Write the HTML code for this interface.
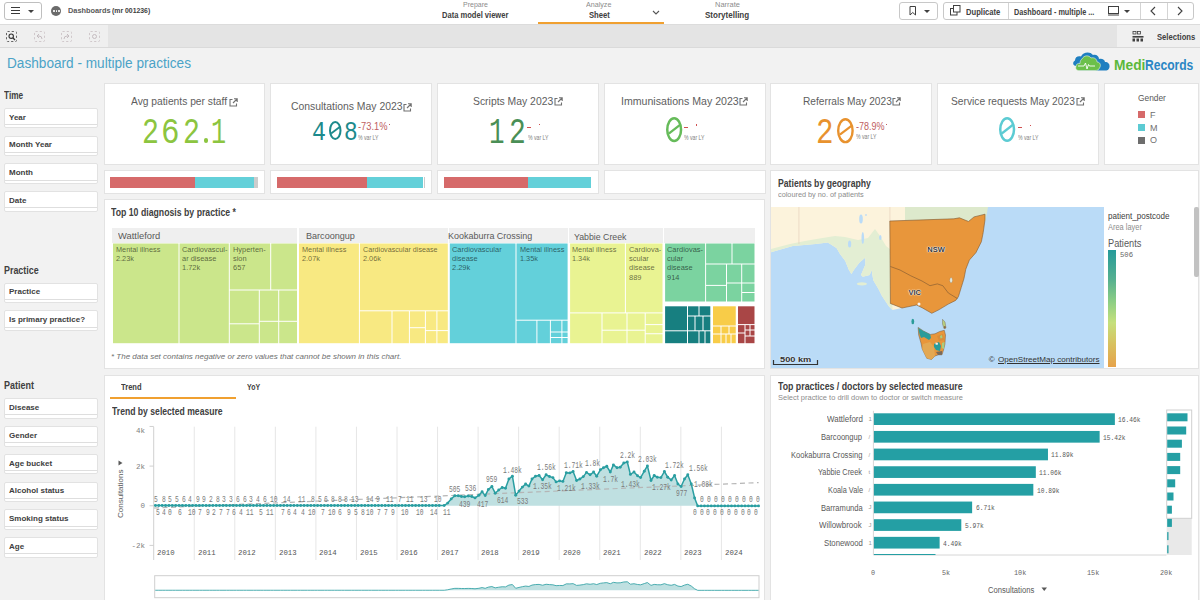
<!DOCTYPE html>
<html><head><meta charset="utf-8">
<style>
*{box-sizing:border-box;margin:0;padding:0}
html,body{width:1200px;height:600px;overflow:hidden;background:#f2f2f2;font-family:"Liberation Sans",sans-serif}
.a{position:absolute}
.t{position:absolute;white-space:nowrap;line-height:normal;transform-origin:0 0}
.card{position:absolute;background:#fff;border:1px solid #e3e3e3}
svg{position:absolute;overflow:visible}
</style></head><body>
<div class="a" style="left:0px;top:0px;width:1200px;height:24px;background:#fff;"></div>
<div class="a" style="left:4px;top:2px;width:38px;height:18px;border:1px solid #bfbfbf;border-radius:3px;background:#fff"></div>
<div class="a" style="left:11px;top:7px;width:9px;height:1.3px;background:#3a3a3a;"></div>
<div class="a" style="left:11px;top:10px;width:9px;height:1.3px;background:#3a3a3a;"></div>
<div class="a" style="left:11px;top:13px;width:9px;height:1.3px;background:#3a3a3a;"></div>
<div class="a" style="left:28px;top:10px;width:0;height:0;border-left:3px solid transparent;border-right:3px solid transparent;border-top:3.5px solid #404040"></div>
<div class="a" style="left:51px;top:6px;width:10px;height:10px;border-radius:50%;background:#6b6b6b"></div>
<div class="a" style="left:53.2px;top:10.2px;width:1.6px;height:1.6px;background:#fff;border-radius:50%"></div>
<div class="a" style="left:55.6px;top:10.2px;width:1.6px;height:1.6px;background:#fff;border-radius:50%"></div>
<div class="a" style="left:58px;top:10.2px;width:1.6px;height:1.6px;background:#fff;border-radius:50%"></div>
<div class="t" style="left:68.00px;top:6.36px;font-family:'Liberation Sans';font-size:8px;font-weight:700;font-style:normal;color:#595959;transform:scaleX(0.9191);">Dashboards</div>
<div class="t" style="left:111.50px;top:6.36px;font-family:'Liberation Sans';font-size:8px;font-weight:700;font-style:normal;color:#404040;transform:scaleX(0.8592);">(mr 001236)</div>
<div class="t" style="left:463.00px;top:1.26px;font-family:'Liberation Sans';font-size:7px;font-weight:400;font-style:normal;color:#8c8c8c;">Prepare</div>
<div class="t" style="left:441.70px;top:9.81px;font-family:'Liberation Sans';font-size:8.5px;font-weight:700;font-style:normal;color:#404040;transform:scaleX(0.8894);">Data model viewer</div>
<div class="t" style="left:586.25px;top:1.26px;font-family:'Liberation Sans';font-size:7px;font-weight:400;font-style:normal;color:#8c8c8c;transform:scaleX(1.0196);">Analyze</div>
<div class="t" style="left:588.50px;top:9.81px;font-family:'Liberation Sans';font-size:8.5px;font-weight:700;font-style:normal;color:#404040;transform:scaleX(0.9007);">Sheet</div>
<svg style="left:652px;top:10px" width="8" height="5"><path d="M1 1 L4 4 L7 1" stroke="#555" stroke-width="1.1" fill="none"/></svg>
<div class="a" style="left:538px;top:22px;width:126px;height:2px;background:#f0a030;"></div>
<div class="t" style="left:714.50px;top:1.26px;font-family:'Liberation Sans';font-size:7px;font-weight:400;font-style:normal;color:#8c8c8c;transform:scaleX(1.0662);">Narrate</div>
<div class="t" style="left:704.60px;top:9.81px;font-family:'Liberation Sans';font-size:8.5px;font-weight:700;font-style:normal;color:#404040;transform:scaleX(0.9450);">Storytelling</div>
<div class="a" style="left:899px;top:2px;width:39px;height:18px;border:1px solid #c8c8c8;border-radius:3px;background:#fff"></div>
<svg style="left:909px;top:6px" width="8" height="10"><path d="M1 0.5 H6.5 V9 L3.75 6.5 L1 9 Z" stroke="#404040" stroke-width="1" fill="none"/></svg>
<div class="a" style="left:924px;top:10px;width:0;height:0;border-left:3px solid transparent;border-right:3px solid transparent;border-top:3.5px solid #404040"></div>
<div class="a" style="left:943px;top:2px;width:251px;height:18px;border:1px solid #c8c8c8;border-radius:3px;background:#fff"></div>
<div class="a" style="left:1007.5px;top:3px;width:1px;height:16px;background:#d4d4d4;"></div>
<div class="a" style="left:1139.5px;top:3px;width:1px;height:16px;background:#d4d4d4;"></div>
<div class="a" style="left:1166.5px;top:3px;width:1px;height:16px;background:#d4d4d4;"></div>
<svg style="left:950px;top:5px" width="12" height="11"><rect x="0.5" y="3.5" width="6.5" height="6.5" fill="#fff" stroke="#404040"/><rect x="3.5" y="0.5" width="6.5" height="6.5" fill="#fff" stroke="#404040"/></svg>
<div class="t" style="left:966.00px;top:6.51px;font-family:'Liberation Sans';font-size:8.5px;font-weight:700;font-style:normal;color:#404040;transform:scaleX(0.8954);">Duplicate</div>
<div class="t" style="left:1014.00px;top:6.51px;font-family:'Liberation Sans';font-size:8.5px;font-weight:700;font-style:normal;color:#404040;transform:scaleX(0.8545);">Dashboard - multiple ...</div>
<svg style="left:1108px;top:6px" width="12" height="10"><rect x="0.5" y="0.5" width="10" height="7" fill="none" stroke="#404040"/><path d="M0 9 H11" stroke="#404040"/></svg>
<div class="a" style="left:1124px;top:10px;width:0;height:0;border-left:3px solid transparent;border-right:3px solid transparent;border-top:3.5px solid #404040"></div>
<svg style="left:1150px;top:6px" width="6" height="10"><path d="M5 1 L1 5 L5 9" stroke="#404040" stroke-width="1.1" fill="none"/></svg>
<svg style="left:1177px;top:6px" width="6" height="10"><path d="M1 1 L5 5 L1 9" stroke="#404040" stroke-width="1.1" fill="none"/></svg>
<div class="a" style="left:0px;top:24px;width:1200px;height:24px;background:#e4e4e4;"></div>
<div class="a" style="left:0px;top:25px;width:108px;height:22px;background:#efefef;"></div>
<div class="a" style="left:1117px;top:25px;width:83px;height:22px;background:#f0f0f0;"></div>
<div class="a" style="left:0px;top:24px;width:1200px;height:1px;background:#dcdcdc;"></div>
<div class="a" style="left:0px;top:47px;width:1200px;height:1px;background:#dadada;"></div>
<svg style="left:6px;top:31px" width="11" height="11"><rect x="0.5" y="0.5" width="10" height="10" rx="1" fill="none" stroke="#666" stroke-width="1" stroke-dasharray="2.2 2"/></svg>
<svg style="left:34px;top:31px" width="11" height="11"><rect x="0.5" y="0.5" width="10" height="10" rx="1" fill="none" stroke="#d0c8cb" stroke-width="1" stroke-dasharray="2.2 2"/></svg>
<svg style="left:61px;top:31px" width="11" height="11"><rect x="0.5" y="0.5" width="10" height="10" rx="1" fill="none" stroke="#d0c8cb" stroke-width="1" stroke-dasharray="2.2 2"/></svg>
<svg style="left:89px;top:31px" width="11" height="11"><rect x="0.5" y="0.5" width="10" height="10" rx="1" fill="none" stroke="#d0c8cb" stroke-width="1" stroke-dasharray="2.2 2"/></svg>
<svg style="left:8px;top:33px" width="8" height="8"><circle cx="3.2" cy="3.2" r="2.2" stroke="#333" stroke-width="1.1" fill="none"/><path d="M4.8 4.8 L7 7" stroke="#333" stroke-width="1.3"/></svg>
<svg style="left:36px;top:33px" width="7" height="7"><path d="M6 6 Q6 3 3 3 H1 M3 1 L1 3 L3 5" stroke="#c5bcc0" stroke-width="1" fill="none"/></svg>
<svg style="left:63px;top:33px" width="7" height="7"><path d="M1 6 Q1 3 4 3 H6 M4 1 L6 3 L4 5" stroke="#c5bcc0" stroke-width="1" fill="none"/></svg>
<svg style="left:91px;top:33px" width="7" height="7"><circle cx="3.5" cy="3.5" r="2" stroke="#c5bcc0" stroke-width="1" fill="none"/></svg>
<svg style="left:1132px;top:31px" width="12" height="11"><rect x="1" y="0.5" width="3" height="2.5" fill="none" stroke="#404040" stroke-width="0.8"/><rect x="5.5" y="0.5" width="3" height="2.5" fill="none" stroke="#404040" stroke-width="0.8"/><rect x="0.5" y="5" width="11" height="1.6" fill="#404040"/><rect x="0.5" y="7.5" width="2.5" height="3" fill="#404040"/><rect x="4.5" y="7.5" width="2.5" height="3" fill="#404040"/><rect x="8.5" y="7.5" width="2.5" height="3" fill="#404040"/></svg>
<div class="t" style="left:1157.00px;top:32.31px;font-family:'Liberation Sans';font-size:8.5px;font-weight:700;font-style:normal;color:#404040;transform:scaleX(0.8998);">Selections</div>
<div class="t" style="left:6.53px;top:55.13px;font-family:'Liberation Sans';font-size:14px;font-weight:400;font-style:normal;color:#4ba3c7;transform:scaleX(0.9730);">Dashboard - multiple practices</div>
<svg style="left:1072px;top:51px" width="40" height="22" viewBox="0 0 40 22">
<path d="M4 15 C1 15 0 11 3 9.5 C3 6 6 4.5 9 5.5 C11 1 18 0 21 4 C24 3 27 5 27 8 C30 7 33 9 33 11 C36 11 38 13 37.5 16 C37 19 35 19.5 33 19.5 L8 19.5 C5 19.5 4 17.5 4 15 Z" fill="#1f7fc0"/>
<path d="M10 8 C12 4 17 4 19 7 C22 6 25 8 25 11 C28 11 29 14 28 16 C27 19 25 19.5 23 19.5 L8 19.5 C5 20 3 18 4 15.5 C4 13 6 12 8 12.5 C8 10 9 8.5 10 8 Z" fill="#6cc04a" stroke="#e9f4e2" stroke-width="0.6"/>
<path d="M6 15 H12 L13.5 12 L15 18 L16.5 13.5 L17.5 15 H23" stroke="#fff" stroke-width="0.9" fill="none"/>
</svg>
<div class="t" style="left:1113.70px;top:57.33px;font-family:'Liberation Sans';font-size:14px;font-weight:700;font-style:normal;color:#5cb83a;transform:scaleX(0.9839);">Medi</div>
<div class="t" style="left:1144.50px;top:57.33px;font-family:'Liberation Sans';font-size:14px;font-weight:700;font-style:normal;color:#2a86c4;transform:scaleX(0.8625);">Records</div>
<div class="t" style="left:3.50px;top:89.65px;font-family:'Liberation Sans';font-size:10px;font-weight:700;font-style:normal;color:#404040;transform:scaleX(0.8264);">Time</div>
<div class="a" style="left:4px;top:107.9px;width:93.5px;height:20.5px;background:#fff;border:1px solid #e2e2e2;border-radius:2px"></div>
<div class="a" style="left:4.5px;top:124.10000000000001px;width:92.5px;height:1px;background:#dedede;"></div>
<div class="t" style="left:9.00px;top:112.66px;font-family:'Liberation Sans';font-size:8px;font-weight:700;font-style:normal;color:#404040;">Year</div>
<div class="a" style="left:4px;top:135.65px;width:93.5px;height:20.5px;background:#fff;border:1px solid #e2e2e2;border-radius:2px"></div>
<div class="a" style="left:4.5px;top:151.85px;width:92.5px;height:1px;background:#dedede;"></div>
<div class="t" style="left:9.00px;top:140.41px;font-family:'Liberation Sans';font-size:8px;font-weight:700;font-style:normal;color:#404040;">Month Year</div>
<div class="a" style="left:4px;top:163.4px;width:93.5px;height:20.5px;background:#fff;border:1px solid #e2e2e2;border-radius:2px"></div>
<div class="a" style="left:4.5px;top:179.6px;width:92.5px;height:1px;background:#dedede;"></div>
<div class="t" style="left:9.00px;top:168.16px;font-family:'Liberation Sans';font-size:8px;font-weight:700;font-style:normal;color:#404040;">Month</div>
<div class="a" style="left:4px;top:191.15px;width:93.5px;height:20.5px;background:#fff;border:1px solid #e2e2e2;border-radius:2px"></div>
<div class="a" style="left:4.5px;top:207.35px;width:92.5px;height:1px;background:#dedede;"></div>
<div class="t" style="left:9.00px;top:195.91px;font-family:'Liberation Sans';font-size:8px;font-weight:700;font-style:normal;color:#404040;">Date</div>
<div class="t" style="left:3.50px;top:264.55px;font-family:'Liberation Sans';font-size:10px;font-weight:700;font-style:normal;color:#404040;transform:scaleX(0.8894);">Practice</div>
<div class="a" style="left:4px;top:282.5px;width:93.5px;height:20.5px;background:#fff;border:1px solid #e2e2e2;border-radius:2px"></div>
<div class="a" style="left:4.5px;top:298.7px;width:92.5px;height:1px;background:#dedede;"></div>
<div class="t" style="left:9.00px;top:287.26px;font-family:'Liberation Sans';font-size:8px;font-weight:700;font-style:normal;color:#404040;">Practice</div>
<div class="a" style="left:4px;top:310.3px;width:93.5px;height:20.5px;background:#fff;border:1px solid #e2e2e2;border-radius:2px"></div>
<div class="a" style="left:4.5px;top:326.5px;width:92.5px;height:1px;background:#dedede;"></div>
<div class="t" style="left:9.00px;top:315.06px;font-family:'Liberation Sans';font-size:8px;font-weight:700;font-style:normal;color:#404040;">Is primary practice?</div>
<div class="t" style="left:3.50px;top:380.45px;font-family:'Liberation Sans';font-size:10px;font-weight:700;font-style:normal;color:#404040;transform:scaleX(0.8968);">Patient</div>
<div class="a" style="left:4px;top:398.2px;width:93.5px;height:20.5px;background:#fff;border:1px solid #e2e2e2;border-radius:2px"></div>
<div class="a" style="left:4.5px;top:414.4px;width:92.5px;height:1px;background:#dedede;"></div>
<div class="t" style="left:9.00px;top:402.96px;font-family:'Liberation Sans';font-size:8px;font-weight:700;font-style:normal;color:#404040;">Disease</div>
<div class="a" style="left:4px;top:426.0px;width:93.5px;height:20.5px;background:#fff;border:1px solid #e2e2e2;border-radius:2px"></div>
<div class="a" style="left:4.5px;top:442.2px;width:92.5px;height:1px;background:#dedede;"></div>
<div class="t" style="left:9.00px;top:430.76px;font-family:'Liberation Sans';font-size:8px;font-weight:700;font-style:normal;color:#404040;">Gender</div>
<div class="a" style="left:4px;top:453.8px;width:93.5px;height:20.5px;background:#fff;border:1px solid #e2e2e2;border-radius:2px"></div>
<div class="a" style="left:4.5px;top:470.0px;width:92.5px;height:1px;background:#dedede;"></div>
<div class="t" style="left:9.00px;top:458.56px;font-family:'Liberation Sans';font-size:8px;font-weight:700;font-style:normal;color:#404040;">Age bucket</div>
<div class="a" style="left:4px;top:481.6px;width:93.5px;height:20.5px;background:#fff;border:1px solid #e2e2e2;border-radius:2px"></div>
<div class="a" style="left:4.5px;top:497.8px;width:92.5px;height:1px;background:#dedede;"></div>
<div class="t" style="left:9.00px;top:486.36px;font-family:'Liberation Sans';font-size:8px;font-weight:700;font-style:normal;color:#404040;">Alcohol status</div>
<div class="a" style="left:4px;top:509.4px;width:93.5px;height:20.5px;background:#fff;border:1px solid #e2e2e2;border-radius:2px"></div>
<div class="a" style="left:4.5px;top:525.6px;width:92.5px;height:1px;background:#dedede;"></div>
<div class="t" style="left:9.00px;top:514.16px;font-family:'Liberation Sans';font-size:8px;font-weight:700;font-style:normal;color:#404040;">Smoking status</div>
<div class="a" style="left:4px;top:537.2px;width:93.5px;height:20.5px;background:#fff;border:1px solid #e2e2e2;border-radius:2px"></div>
<div class="a" style="left:4.5px;top:553.4000000000001px;width:92.5px;height:1px;background:#dedede;"></div>
<div class="t" style="left:9.00px;top:541.96px;font-family:'Liberation Sans';font-size:8px;font-weight:700;font-style:normal;color:#404040;">Age</div>
<div class="card" style="left:104px;top:83px;width:161px;height:82px"></div>
<div class="card" style="left:270px;top:83px;width:162px;height:82px"></div>
<div class="card" style="left:437px;top:83px;width:162px;height:82px"></div>
<div class="card" style="left:604px;top:83px;width:162px;height:82px"></div>
<div class="card" style="left:770px;top:83px;width:162px;height:82px"></div>
<div class="card" style="left:937px;top:83px;width:162px;height:82px"></div>
<div class="card" style="left:1104px;top:83px;width:95px;height:82px"></div>
<div class="t" style="left:131.40px;top:95.14px;font-family:'Liberation Sans';font-size:11px;font-weight:400;font-style:normal;color:#5e5e5e;transform:scaleX(0.9328);">Avg patients per staff</div>
<svg style="left:229px;top:97.5px" width="9" height="9" viewBox="0 0 9 9"><path d="M3.5 1.5 H1 V8 H7.5 V5.5" stroke="#707070" stroke-width="1.1" fill="none"/><path d="M4 5 L8 1 M5 0.8 H8.2 V4" stroke="#707070" stroke-width="1.1" fill="none"/></svg>
<div class="t" style="left:141.58px;top:111.58px;font-family:'Liberation Mono';font-size:37.12px;font-weight:400;font-style:normal;color:#8cc540;transform:scaleX(0.7611);">2</div>
<div class="t" style="left:161.33px;top:111.58px;font-family:'Liberation Mono';font-size:37.12px;font-weight:400;font-style:normal;color:#8cc540;transform:scaleX(0.8333);">6</div>
<div class="t" style="left:183.08px;top:111.58px;font-family:'Liberation Mono';font-size:37.12px;font-weight:400;font-style:normal;color:#8cc540;transform:scaleX(0.7611);">2</div>
<div class="a" style="left:203.6px;top:138.39999999999998px;width:4.200000000000017px;height:4.200000000000017px;border-radius:50%;background:#8cc540"></div>
<div class="t" style="left:211.04px;top:111.58px;font-family:'Liberation Mono';font-size:37.12px;font-weight:400;font-style:normal;color:#8cc540;transform:scaleX(0.6789);">1</div>
<div class="t" style="left:290.60px;top:100.45px;font-family:'Liberation Sans';font-size:11px;font-weight:400;font-style:normal;color:#5e5e5e;transform:scaleX(0.9449);">Consultations May 2023</div>
<svg style="left:403px;top:103px" width="9" height="9" viewBox="0 0 9 9"><path d="M3.5 1.5 H1 V8 H7.5 V5.5" stroke="#707070" stroke-width="1.1" fill="none"/><path d="M4 5 L8 1 M5 0.8 H8.2 V4" stroke="#707070" stroke-width="1.1" fill="none"/></svg>
<div class="t" style="left:312.18px;top:116.01px;font-family:'Liberation Mono';font-size:28.5px;font-weight:400;font-style:normal;color:#1d8a8c;transform:scaleX(0.8167);">4</div>
<svg style="left:328.5px;top:120.6px" width="12.50" height="18.90"><ellipse cx="6.25" cy="9.45" rx="5.25" ry="8.45" stroke="#1d8a8c" stroke-width="2" fill="none"/><path d="M2.12 12.47 L11.00 5.67" stroke="#1d8a8c" stroke-width="1.80" fill="none"/></svg>
<div class="t" style="left:343.70px;top:116.01px;font-family:'Liberation Mono';font-size:28.5px;font-weight:400;font-style:normal;color:#1d8a8c;transform:scaleX(0.8000);">8</div>
<div class="t" style="left:357.50px;top:120.85px;font-family:'Liberation Sans';font-size:10px;font-weight:400;font-style:normal;color:#c0605f;transform:scaleX(0.9279);">-73.1%</div>
<div class="a" style="left:388.5px;top:123.5px;width:1.3px;height:1.3px;background:#c0605f;"></div>
<div class="t" style="left:358.00px;top:133.52px;font-family:'Liberation Sans';font-size:6.5px;font-weight:400;font-style:normal;color:#808080;transform:scaleX(0.7909);">% var LY</div>
<div class="t" style="left:472.90px;top:94.75px;font-family:'Liberation Sans';font-size:11px;font-weight:400;font-style:normal;color:#5e5e5e;transform:scaleX(0.9439);">Scripts May 2023</div>
<svg style="left:554px;top:97px" width="9" height="9" viewBox="0 0 9 9"><path d="M3.5 1.5 H1 V8 H7.5 V5.5" stroke="#707070" stroke-width="1.1" fill="none"/><path d="M4 5 L8 1 M5 0.8 H8.2 V4" stroke="#707070" stroke-width="1.1" fill="none"/></svg>
<div class="t" style="left:489.41px;top:111.85px;font-family:'Liberation Mono';font-size:37.27px;font-weight:400;font-style:normal;color:#4a8f56;transform:scaleX(0.6947);">1</div>
<div class="t" style="left:509.10px;top:111.85px;font-family:'Liberation Mono';font-size:37.27px;font-weight:400;font-style:normal;color:#4a8f56;transform:scaleX(0.7500);">2</div>
<div class="a" style="left:527px;top:126.8px;width:4px;height:1.2px;background:#d05050;"></div>
<div class="a" style="left:539px;top:124px;width:1.4px;height:1.4px;background:#d05050;"></div>
<div class="t" style="left:528.00px;top:133.62px;font-family:'Liberation Sans';font-size:6.5px;font-weight:400;font-style:normal;color:#808080;transform:scaleX(0.7909);">% var LY</div>
<div class="t" style="left:620.64px;top:94.95px;font-family:'Liberation Sans';font-size:11px;font-weight:400;font-style:normal;color:#5e5e5e;transform:scaleX(0.9624);">Immunisations May 2023</div>
<svg style="left:739px;top:97px" width="9" height="9" viewBox="0 0 9 9"><path d="M3.5 1.5 H1 V8 H7.5 V5.5" stroke="#707070" stroke-width="1.1" fill="none"/><path d="M4 5 L8 1 M5 0.8 H8.2 V4" stroke="#707070" stroke-width="1.1" fill="none"/></svg>
<svg style="left:665.7px;top:117px" width="16.30" height="25.30"><ellipse cx="8.15" cy="12.65" rx="6.90" ry="11.40" stroke="#66bb5a" stroke-width="2.5" fill="none"/><path d="M2.77 16.70 L14.34 7.59" stroke="#66bb5a" stroke-width="2.25" fill="none"/></svg>
<div class="a" style="left:684px;top:126.8px;width:4px;height:1.2px;background:#d05050;"></div>
<div class="a" style="left:696px;top:124.3px;width:1.4px;height:1.4px;background:#d05050;"></div>
<div class="t" style="left:684.00px;top:134.12px;font-family:'Liberation Sans';font-size:6.5px;font-weight:400;font-style:normal;color:#808080;transform:scaleX(0.7909);">% var LY</div>
<div class="t" style="left:802.50px;top:94.84px;font-family:'Liberation Sans';font-size:11px;font-weight:400;font-style:normal;color:#5e5e5e;transform:scaleX(0.9252);">Referrals May 2023</div>
<svg style="left:892px;top:97px" width="9" height="9" viewBox="0 0 9 9"><path d="M3.5 1.5 H1 V8 H7.5 V5.5" stroke="#707070" stroke-width="1.1" fill="none"/><path d="M4 5 L8 1 M5 0.8 H8.2 V4" stroke="#707070" stroke-width="1.1" fill="none"/></svg>
<div class="t" style="left:815.83px;top:111.85px;font-family:'Liberation Mono';font-size:37.27px;font-weight:400;font-style:normal;color:#e8922e;transform:scaleX(0.7833);">2</div>
<svg style="left:837.2px;top:117.6px" width="16.80" height="25.30"><ellipse cx="8.40" cy="12.65" rx="7.20" ry="11.45" stroke="#e8922e" stroke-width="2.4" fill="none"/><path d="M2.86 16.70 L14.78 7.59" stroke="#e8922e" stroke-width="2.16" fill="none"/></svg>
<div class="t" style="left:855.60px;top:120.95px;font-family:'Liberation Sans';font-size:10px;font-weight:400;font-style:normal;color:#c0605f;transform:scaleX(0.8996);">-78.9%</div>
<div class="a" style="left:886px;top:124px;width:1.3px;height:1.3px;background:#c0605f;"></div>
<div class="t" style="left:856.00px;top:133.42px;font-family:'Liberation Sans';font-size:6.5px;font-weight:400;font-style:normal;color:#808080;transform:scaleX(0.7909);">% var LY</div>
<div class="t" style="left:951.25px;top:94.95px;font-family:'Liberation Sans';font-size:11px;font-weight:400;font-style:normal;color:#5e5e5e;transform:scaleX(0.9293);">Service requests May 2023</div>
<svg style="left:1076px;top:97px" width="9" height="9" viewBox="0 0 9 9"><path d="M3.5 1.5 H1 V8 H7.5 V5.5" stroke="#707070" stroke-width="1.1" fill="none"/><path d="M4 5 L8 1 M5 0.8 H8.2 V4" stroke="#707070" stroke-width="1.1" fill="none"/></svg>
<svg style="left:998.75px;top:117.4px" width="16.25" height="25.00"><ellipse cx="8.12" cy="12.50" rx="6.88" ry="11.25" stroke="#5ccbd3" stroke-width="2.5" fill="none"/><path d="M2.76 16.50 L14.30 7.50" stroke="#5ccbd3" stroke-width="2.25" fill="none"/></svg>
<div class="a" style="left:1018px;top:127px;width:3.5px;height:1.2px;background:#d05050;"></div>
<div class="a" style="left:1030px;top:124.5px;width:1.4px;height:1.4px;background:#d05050;"></div>
<div class="t" style="left:1018.00px;top:134.12px;font-family:'Liberation Sans';font-size:6.5px;font-weight:400;font-style:normal;color:#808080;transform:scaleX(0.7909);">% var LY</div>
<div class="t" style="left:1138.20px;top:92.56px;font-family:'Liberation Sans';font-size:9px;font-weight:400;font-style:normal;color:#595959;transform:scaleX(0.9293);">Gender</div>
<div class="a" style="left:1138px;top:111.2px;width:7px;height:6.8px;background:#d66a6a;"></div>
<div class="t" style="left:1150.00px;top:109.86px;font-family:'Liberation Sans';font-size:9px;font-weight:400;font-style:normal;color:#707070;">F</div>
<div class="a" style="left:1138px;top:124.0px;width:7px;height:6.8px;background:#5ccbd3;"></div>
<div class="t" style="left:1150.00px;top:122.66px;font-family:'Liberation Sans';font-size:9px;font-weight:400;font-style:normal;color:#707070;">M</div>
<div class="a" style="left:1138px;top:136.8px;width:7px;height:6.8px;background:#6d6d6d;"></div>
<div class="t" style="left:1150.00px;top:135.46px;font-family:'Liberation Sans';font-size:9px;font-weight:400;font-style:normal;color:#707070;">O</div>
<div class="card" style="left:104px;top:170px;width:161px;height:24px"></div>
<div class="card" style="left:270px;top:170px;width:162px;height:24px"></div>
<div class="card" style="left:437px;top:170px;width:162px;height:24px"></div>
<div class="card" style="left:604px;top:170px;width:162px;height:24px"></div>
<div class="a" style="left:110px;top:177px;width:85px;height:11px;background:#d66a6a;"></div>
<div class="a" style="left:195px;top:177px;width:59px;height:11px;background:#63d0d9;"></div>
<div class="a" style="left:254px;top:177px;width:4px;height:11px;background:#cccccc;"></div>
<div class="a" style="left:277px;top:177px;width:90.4px;height:11px;background:#d66a6a;"></div>
<div class="a" style="left:367.4px;top:177px;width:56.1px;height:11px;background:#63d0d9;"></div>
<div class="a" style="left:423.5px;top:177px;width:1.0px;height:11px;background:#cccccc;"></div>
<div class="a" style="left:444px;top:177px;width:84.2px;height:11px;background:#d66a6a;"></div>
<div class="a" style="left:528.2px;top:177px;width:63.0px;height:11px;background:#63d0d9;"></div>
<div class="card" style="left:104px;top:199px;width:661px;height:170px"></div>
<div class="t" style="left:110.70px;top:207.15px;font-family:'Liberation Sans';font-size:10px;font-weight:700;font-style:normal;color:#404040;transform:scaleX(0.8723);">Top 10 diagnosis by practice *</div>
<div class="a" style="left:112.3px;top:228.3px;width:185.2px;height:14.7px;background:#efefef;"></div>
<div class="a" style="left:298.5px;top:228.3px;width:149.8px;height:14.7px;background:#efefef;"></div>
<div class="a" style="left:449.3px;top:228.3px;width:118.8px;height:14.7px;background:#efefef;"></div>
<div class="a" style="left:569.1px;top:228.3px;width:94.3px;height:14.7px;background:#efefef;"></div>
<div class="a" style="left:664.4px;top:228.3px;width:90.6px;height:14.7px;background:#efefef;"></div>
<div class="t" style="left:118.20px;top:230.40px;font-family:'Liberation Sans';font-size:9.5px;font-weight:400;font-style:normal;color:#595959;transform:scaleX(0.9846);">Wattleford</div>
<div class="t" style="left:305.60px;top:230.40px;font-family:'Liberation Sans';font-size:9.5px;font-weight:400;font-style:normal;color:#595959;transform:scaleX(0.9539);">Barcoongup</div>
<div class="t" style="left:448.40px;top:230.40px;font-family:'Liberation Sans';font-size:9.5px;font-weight:400;font-style:normal;color:#595959;transform:scaleX(0.9443);">Kookaburra Crossing</div>
<div class="t" style="left:574.40px;top:230.90px;font-family:'Liberation Sans';font-size:9.5px;font-weight:400;font-style:normal;color:#595959;transform:scaleX(0.9228);">Yabbie Creek</div>
<svg style="left:0;top:0" width="1200" height="600"><rect x="113.00" y="243.50" width="65.50" height="99.70" fill="#cbe68b"/><rect x="179.50" y="243.50" width="49.30" height="99.70" fill="#cbe68b"/><rect x="229.80" y="243.50" width="40.40" height="46.00" fill="#cbe68b"/><rect x="271.20" y="243.50" width="25.80" height="46.00" fill="#cbe68b"/><rect x="229.80" y="290.50" width="29.00" height="32.80" fill="#cbe68b"/><rect x="229.80" y="324.30" width="29.00" height="18.90" fill="#cbe68b"/><rect x="259.80" y="290.50" width="18.40" height="30.30" fill="#cbe68b"/><rect x="259.80" y="321.80" width="18.40" height="21.40" fill="#cbe68b"/><rect x="279.20" y="290.50" width="17.80" height="30.30" fill="#cbe68b"/><rect x="279.20" y="321.80" width="17.80" height="21.40" fill="#cbe68b"/><rect x="299.00" y="243.50" width="59.90" height="99.70" fill="#f8e982"/><rect x="359.90" y="243.50" width="87.90" height="66.80" fill="#f8e982"/><rect x="359.90" y="311.30" width="31.60" height="31.90" fill="#f8e982"/><rect x="392.50" y="311.30" width="16.40" height="31.90" fill="#f8e982"/><rect x="409.90" y="311.30" width="15.00" height="15.90" fill="#f8e982"/><rect x="409.90" y="328.20" width="15.00" height="15.00" fill="#f8e982"/><rect x="425.90" y="311.30" width="10.50" height="18.80" fill="#f8e982"/><rect x="425.90" y="331.10" width="10.50" height="12.10" fill="#f8e982"/><rect x="437.40" y="311.30" width="10.40" height="18.80" fill="#f8e982"/><rect x="437.40" y="331.10" width="10.40" height="12.10" fill="#f8e982"/><rect x="449.80" y="243.50" width="65.70" height="99.70" fill="#63d0da"/><rect x="516.50" y="243.50" width="51.10" height="76.20" fill="#63d0da"/><rect x="516.50" y="320.70" width="19.90" height="22.50" fill="#63d0da"/><rect x="537.40" y="320.70" width="12.50" height="22.50" fill="#63d0da"/><rect x="550.90" y="320.70" width="10.50" height="10.80" fill="#63d0da"/><rect x="550.90" y="332.50" width="10.50" height="4.50" fill="#63d0da"/><rect x="550.90" y="338.00" width="10.50" height="5.20" fill="#63d0da"/><rect x="562.40" y="320.70" width="5.20" height="10.80" fill="#63d0da"/><rect x="562.40" y="332.50" width="5.20" height="4.50" fill="#63d0da"/><rect x="562.40" y="338.00" width="5.20" height="5.20" fill="#63d0da"/><rect x="570.10" y="243.50" width="54.80" height="68.90" fill="#e9f392"/><rect x="625.90" y="243.50" width="36.60" height="68.90" fill="#e9f392"/><rect x="570.10" y="313.40" width="31.40" height="29.80" fill="#e9f392"/><rect x="602.50" y="313.40" width="24.00" height="16.30" fill="#e9f392"/><rect x="602.50" y="330.70" width="24.00" height="12.50" fill="#e9f392"/><rect x="627.50" y="313.40" width="17.20" height="16.30" fill="#e9f392"/><rect x="627.50" y="330.70" width="17.20" height="12.50" fill="#e9f392"/><rect x="645.70" y="313.40" width="16.80" height="10.70" fill="#e9f392"/><rect x="645.70" y="325.10" width="16.80" height="8.15" fill="#e9f392"/><rect x="645.70" y="334.25" width="16.80" height="8.95" fill="#e9f392"/><rect x="665.10" y="243.50" width="40.00" height="58.00" fill="#7bd3a0"/><rect x="706.10" y="243.50" width="25.40" height="20.00" fill="#7bd3a0"/><rect x="732.50" y="243.50" width="22.00" height="20.00" fill="#7bd3a0"/><rect x="706.10" y="264.50" width="19.90" height="20.40" fill="#7bd3a0"/><rect x="727.00" y="264.50" width="14.20" height="18.00" fill="#7bd3a0"/><rect x="742.20" y="264.50" width="12.30" height="18.00" fill="#7bd3a0"/><rect x="706.10" y="285.90" width="19.90" height="15.60" fill="#7bd3a0"/><rect x="727.00" y="283.50" width="14.20" height="18.00" fill="#7bd3a0"/><rect x="742.20" y="283.50" width="12.30" height="8.50" fill="#7bd3a0"/><rect x="742.20" y="293.00" width="12.30" height="8.50" fill="#7bd3a0"/><rect x="665.10" y="306.30" width="21.90" height="24.00" fill="#177f80"/><rect x="665.10" y="331.30" width="21.90" height="11.90" fill="#177f80"/><rect x="688.00" y="306.30" width="10.50" height="9.20" fill="#177f80"/><rect x="699.50" y="306.30" width="10.80" height="9.20" fill="#177f80"/><rect x="688.00" y="316.50" width="6.50" height="13.80" fill="#177f80"/><rect x="695.50" y="316.50" width="7.00" height="13.80" fill="#177f80"/><rect x="703.50" y="316.50" width="6.80" height="13.80" fill="#177f80"/><rect x="688.00" y="331.30" width="10.50" height="11.90" fill="#177f80"/><rect x="699.50" y="331.30" width="5.00" height="11.90" fill="#177f80"/><rect x="705.50" y="331.30" width="4.80" height="11.90" fill="#177f80"/><rect x="713.00" y="306.30" width="22.75" height="19.20" fill="#f8cc48"/><rect x="713.00" y="326.50" width="7.50" height="7.00" fill="#f8cc48"/><rect x="713.00" y="334.50" width="7.50" height="8.70" fill="#f8cc48"/><rect x="721.50" y="326.50" width="7.00" height="7.00" fill="#f8cc48"/><rect x="729.50" y="326.50" width="6.25" height="7.00" fill="#f8cc48"/><rect x="721.50" y="334.50" width="4.00" height="8.70" fill="#f8cc48"/><rect x="726.50" y="334.50" width="4.00" height="8.70" fill="#f8cc48"/><rect x="731.50" y="334.50" width="4.25" height="8.70" fill="#f8cc48"/><rect x="738.00" y="306.30" width="16.50" height="17.80" fill="#a94646"/><rect x="738.00" y="325.10" width="6.50" height="7.40" fill="#a94646"/><rect x="738.00" y="333.50" width="6.50" height="9.70" fill="#a94646"/><rect x="745.50" y="325.10" width="4.00" height="4.40" fill="#a94646"/><rect x="750.50" y="325.10" width="4.00" height="4.40" fill="#a94646"/><rect x="745.50" y="330.50" width="4.00" height="5.00" fill="#a94646"/><rect x="750.50" y="330.50" width="4.00" height="5.00" fill="#a94646"/><rect x="745.50" y="336.50" width="9.00" height="6.70" fill="#a94646"/></svg>
<div class="t" style="left:116.00px;top:244.76px;font-family:'Liberation Sans';font-size:8px;font-weight:400;font-style:normal;color:rgba(0,0,0,0.58);transform:scaleX(0.9141);">Mental illness</div>
<div class="t" style="left:116.00px;top:254.06px;font-family:'Liberation Sans';font-size:8px;font-weight:400;font-style:normal;color:rgba(0,0,0,0.58);transform:scaleX(0.9139);">2.23k</div>
<div class="t" style="left:182.00px;top:244.76px;font-family:'Liberation Sans';font-size:8px;font-weight:400;font-style:normal;color:rgba(0,0,0,0.58);transform:scaleX(0.9300);">Cardiovascul-</div>
<div class="t" style="left:182.00px;top:254.06px;font-family:'Liberation Sans';font-size:8px;font-weight:400;font-style:normal;color:rgba(0,0,0,0.58);transform:scaleX(0.9300);">ar disease</div>
<div class="t" style="left:182.00px;top:263.36px;font-family:'Liberation Sans';font-size:8px;font-weight:400;font-style:normal;color:rgba(0,0,0,0.58);transform:scaleX(0.9300);">1.72k</div>
<div class="t" style="left:232.70px;top:244.76px;font-family:'Liberation Sans';font-size:8px;font-weight:400;font-style:normal;color:rgba(0,0,0,0.58);transform:scaleX(0.9300);">Hyperten-</div>
<div class="t" style="left:232.70px;top:254.06px;font-family:'Liberation Sans';font-size:8px;font-weight:400;font-style:normal;color:rgba(0,0,0,0.58);transform:scaleX(0.9300);">sion</div>
<div class="t" style="left:232.70px;top:263.36px;font-family:'Liberation Sans';font-size:8px;font-weight:400;font-style:normal;color:rgba(0,0,0,0.58);transform:scaleX(0.9300);">657</div>
<div class="t" style="left:301.50px;top:244.76px;font-family:'Liberation Sans';font-size:8px;font-weight:400;font-style:normal;color:rgba(0,0,0,0.58);transform:scaleX(0.9141);">Mental illness</div>
<div class="t" style="left:301.50px;top:254.06px;font-family:'Liberation Sans';font-size:8px;font-weight:400;font-style:normal;color:rgba(0,0,0,0.58);transform:scaleX(0.9139);">2.07k</div>
<div class="t" style="left:362.50px;top:244.76px;font-family:'Liberation Sans';font-size:8px;font-weight:400;font-style:normal;color:rgba(0,0,0,0.58);transform:scaleX(0.8960);">Cardiovascular disease</div>
<div class="t" style="left:362.50px;top:254.06px;font-family:'Liberation Sans';font-size:8px;font-weight:400;font-style:normal;color:rgba(0,0,0,0.58);transform:scaleX(0.9139);">2.06k</div>
<div class="t" style="left:452.00px;top:244.76px;font-family:'Liberation Sans';font-size:8px;font-weight:400;font-style:normal;color:rgba(0,0,0,0.58);transform:scaleX(0.9300);">Cardiovascular</div>
<div class="t" style="left:452.00px;top:254.06px;font-family:'Liberation Sans';font-size:8px;font-weight:400;font-style:normal;color:rgba(0,0,0,0.58);transform:scaleX(0.9300);">disease</div>
<div class="t" style="left:452.00px;top:263.36px;font-family:'Liberation Sans';font-size:8px;font-weight:400;font-style:normal;color:rgba(0,0,0,0.58);transform:scaleX(0.9300);">2.29k</div>
<div class="t" style="left:520.20px;top:244.76px;font-family:'Liberation Sans';font-size:8px;font-weight:400;font-style:normal;color:rgba(0,0,0,0.58);transform:scaleX(0.9141);">Mental illness</div>
<div class="t" style="left:520.20px;top:254.06px;font-family:'Liberation Sans';font-size:8px;font-weight:400;font-style:normal;color:rgba(0,0,0,0.58);transform:scaleX(0.9139);">1.35k</div>
<div class="t" style="left:572.30px;top:244.76px;font-family:'Liberation Sans';font-size:8px;font-weight:400;font-style:normal;color:rgba(0,0,0,0.58);transform:scaleX(0.9141);">Mental illness</div>
<div class="t" style="left:572.30px;top:254.06px;font-family:'Liberation Sans';font-size:8px;font-weight:400;font-style:normal;color:rgba(0,0,0,0.58);transform:scaleX(0.9139);">1.34k</div>
<div class="t" style="left:628.50px;top:244.76px;font-family:'Liberation Sans';font-size:8px;font-weight:400;font-style:normal;color:rgba(0,0,0,0.58);transform:scaleX(0.9300);">Cardiova-</div>
<div class="t" style="left:628.50px;top:254.06px;font-family:'Liberation Sans';font-size:8px;font-weight:400;font-style:normal;color:rgba(0,0,0,0.58);transform:scaleX(0.9300);">scular</div>
<div class="t" style="left:628.50px;top:263.36px;font-family:'Liberation Sans';font-size:8px;font-weight:400;font-style:normal;color:rgba(0,0,0,0.58);transform:scaleX(0.9300);">disease</div>
<div class="t" style="left:628.50px;top:272.66px;font-family:'Liberation Sans';font-size:8px;font-weight:400;font-style:normal;color:rgba(0,0,0,0.58);transform:scaleX(0.9300);">889</div>
<div class="t" style="left:667.00px;top:244.76px;font-family:'Liberation Sans';font-size:8px;font-weight:400;font-style:normal;color:rgba(0,0,0,0.58);transform:scaleX(0.9300);">Cardiovas-</div>
<div class="t" style="left:667.00px;top:254.06px;font-family:'Liberation Sans';font-size:8px;font-weight:400;font-style:normal;color:rgba(0,0,0,0.58);transform:scaleX(0.9300);">cular</div>
<div class="t" style="left:667.00px;top:263.36px;font-family:'Liberation Sans';font-size:8px;font-weight:400;font-style:normal;color:rgba(0,0,0,0.58);transform:scaleX(0.9300);">disease</div>
<div class="t" style="left:667.00px;top:272.66px;font-family:'Liberation Sans';font-size:8px;font-weight:400;font-style:normal;color:rgba(0,0,0,0.58);transform:scaleX(0.9300);">914</div>
<div class="t" style="left:111.00px;top:352.46px;font-family:'Liberation Sans';font-size:8px;font-weight:400;font-style:italic;color:#6e6e6e;">* The data set contains negative or zero values that cannot be shown in this chart.</div>
<div class="card" style="left:770px;top:170px;width:429px;height:199px"></div>
<div class="t" style="left:778.00px;top:177.95px;font-family:'Liberation Sans';font-size:10px;font-weight:700;font-style:normal;color:#404040;transform:scaleX(0.8664);">Patients by geography</div>
<div class="t" style="left:778.00px;top:189.96px;font-family:'Liberation Sans';font-size:8px;font-weight:400;font-style:normal;color:#8c8c8c;transform:scaleX(0.9133);">coloured by no. of patients</div>
<svg style="left:771px;top:207px" width="333" height="161" viewBox="771 207 333 161"><rect x="771" y="207" width="333" height="161" fill="#badbf7"/><polygon points="771,207 987,207 985,214.2 985,219.7 983.2,232.5 981.4,241.7 975.9,252.7 969.4,260 965.8,269.2 964,278.4 961.2,287.6 958.4,296.7 955.7,300.4 948.3,304.1 939.2,309.6 931.8,313.3 922.4,307.9 916.6,305 902,308 892.5,310 889,306.5 882,296 878.5,289 873.3,280.3 871.5,269.8 869.8,275 862.8,276.8 861,275 865.4,264.5 865.4,257.5 859.3,262.8 854,269.8 851.4,274.1 848.8,269.8 845.3,261 840,254 836.5,247.9 827.8,242.6 815.5,243.9 792.8,246.1 780.5,249.6 771,252.3" fill="#fcf3dc"/><path d="M771 252.3 L780.5 249.6 L792.8 246.1 L815.5 243.9 L827.8 242.6 L836.5 247.9 L840 254 L845.3 261 L848.8 269.8 L851.4 274.1 L854 269.8 L859.3 262.8 L865.4 257.5 L865.4 264.5 L861 275 L862.8 276.8 L869.8 275 L871.5 269.8 L873.3 280.3 L878.5 289 L882 296 L889 306.5 L892.5 310 L891 250 L886 246 L880 236 L875 229 L868 238 L858 240 L845 237 L835 236 L822.5 238 L805 241 L790 244 L771 249 Z" fill="#e3eed3"/><ellipse cx="861.9" cy="283.8" rx="5" ry="1.6" fill="#e3eed3"/><path d="M905 207 L988 207 L985.5 221 L905 221 Z" fill="#dde9cc"/><path d="M798.9 207 V244 M889.9 207 V221" stroke="#e6d3bd" stroke-width="0.7"/><ellipse cx="861" cy="219" rx="1.8" ry="4.5" fill="#badbf7"/><ellipse cx="862.8" cy="238" rx="1.3" ry="6" fill="#badbf7"/><ellipse cx="849.6" cy="244" rx="1.6" ry="3.5" fill="#badbf7"/><ellipse cx="880.3" cy="237.5" rx="1.2" ry="2.5" fill="#badbf7"/><ellipse cx="866" cy="215" rx="0.8" ry="1" fill="#badbf7"/><polygon points="889.8,221 953.9,218.8 959.4,217.8 968.5,221.5 974,216.9 985,214.2 985,219.7 983.2,232.5 981.4,241.7 975.9,252.7 969.4,260 965.8,269.2 964,278.4 961.2,287.6 958.4,296.7 955.7,300.4 948.3,304.1 939.2,309.6 931.8,313.3 922.4,307.9 916.6,305 902,308 890.4,303.5" fill="#e8963b" stroke="#7a5530" stroke-width="0.6"/><path d="M890.4 266.5 L900 270 L910.8 275.8 L922 281 L930 285.7 L937.3 283.9 L942.8 285.7 L948.3 293 L957.5 298.6" stroke="#7a5530" stroke-width="0.6" fill="none"/><ellipse cx="951.1" cy="280.2" rx="1.3" ry="2.6" fill="#e8eee0" stroke="#777" stroke-width="0.3"/><ellipse cx="919" cy="304" rx="1.5" ry="1.5" fill="#f4f4f4"/><path d="M918.1 327.4 L923.3 330.9 L930.3 334.4 L935 333.8 L939.7 331.5 L944.3 330.3 L945.5 335 L944.9 344.3 L943.8 349 L942 354.8 L938.5 354.8 L935 356 L931.5 359.5 L926.8 358.3 L922.2 349 L921 343.2 L918.7 335 Z" fill="#e8963b" stroke="#6f5a48" stroke-width="0.5"/><path d="M918.3 328 L923.3 331 L930.3 334.4 L931 338 L929 340 L924 337 L921 338 L919.5 334 Z" fill="#2a9c9a"/><path d="M934 344 L939 342 L941 346 L940 351 L936 350 L934 347 Z" fill="#2a9c9a"/><path d="M923 344 L930 342 L934 347 L935 356 L931.5 359.5 L926.8 358.3 L922.2 349 Z" fill="#e3a853"/><path d="M937 336 L943 334 L944 340 L939 341 Z" fill="#d98d3a"/><path d="M940 336 L942 335 L942.5 338 L940.5 338.5 Z" fill="#a8cf80"/><path d="M942 343 L944.5 342 L944 349 L942 348 Z" fill="#a8cf80"/><path d="M936 352 L942 351 L942 354.8 L938 355 Z" fill="#7a6a5a"/><path d="M935.5 342.5 L938 343 L937.5 345 L935.5 344.5 Z" fill="#eee"/><path d="M942.5 319.3 L945 322 L946 328 L944 328.6 L942.5 324 Z" fill="#b8d080" stroke="#6f5a48" stroke-width="0.4"/><path d="M944 326 L946 326.5 L945.5 328.6 L943.8 328.3 Z" fill="#8a6a4a"/><ellipse cx="912.8" cy="321.5" rx="1.4" ry="2.8" fill="#2a9c9a"/></svg>
<div class="t" style="left:927.29px;top:245.21px;font-family:'Liberation Sans';font-size:7.5px;font-weight:700;font-style:normal;color:#3a3a3a;text-shadow:0 0 1.5px #fff,0 0 1px #fff,0 0 1px #fff;">NSW</div>
<div class="t" style="left:908.46px;top:288.21px;font-family:'Liberation Sans';font-size:7.5px;font-weight:700;font-style:normal;color:#3a3a3a;text-shadow:0 0 1.5px #fff,0 0 1px #fff,0 0 1px #fff;">VIC</div>
<svg style="left:772px;top:358px" width="48" height="8"><path d="M1.5 2 V6.5 H45.5 V2" stroke="#333" stroke-width="1.2" fill="none"/></svg>
<div class="t" style="left:779.50px;top:355.67px;font-family:'Liberation Sans';font-size:7px;font-weight:700;font-style:normal;color:#333;transform:scaleX(1.3182);text-shadow:0 0 2px #fff;">500 km</div>
<div class="t" style="left:988.70px;top:355.16px;font-family:'Liberation Sans';font-size:8px;font-weight:400;font-style:normal;color:#333;">©</div>
<div class="t" style="left:998.00px;top:355.16px;font-family:'Liberation Sans';font-size:8px;font-weight:400;font-style:normal;color:#333;transform:scaleX(1.0100);text-decoration:underline;">OpenStreetMap contributors</div>
<div class="t" style="left:1107.70px;top:211.31px;font-family:'Liberation Sans';font-size:8.5px;font-weight:400;font-style:normal;color:#404040;transform:scaleX(0.9505);">patient_postcode</div>
<div class="t" style="left:1107.70px;top:221.51px;font-family:'Liberation Sans';font-size:8.5px;font-weight:400;font-style:normal;color:#8c8c8c;transform:scaleX(0.8738);">Area layer</div>
<div class="t" style="left:1107.70px;top:237.55px;font-family:'Liberation Sans';font-size:10px;font-weight:400;font-style:normal;color:#595959;transform:scaleX(0.9216);">Patients</div>
<div class="a" style="left:1107.7px;top:250.1px;width:8.7px;height:117px;background:linear-gradient(#259a9a 0%,#55b090 25%,#8fcf83 45%,#c5e07c 62%,#d8c260 80%,#e6a24a 100%)"></div>
<div class="t" style="left:1120.00px;top:251.05px;font-family:'Liberation Mono';font-size:7.5px;font-weight:400;font-style:normal;color:#666;transform:scaleX(0.9642);">506</div>
<div class="a" style="left:1194.3px;top:207px;width:4.7px;height:70.3px;background:#c2c2c2;border-radius:2px"></div>
<div class="card" style="left:104px;top:375px;width:661px;height:230px"></div>
<div class="t" style="left:121.30px;top:381.51px;font-family:'Liberation Sans';font-size:8.5px;font-weight:700;font-style:normal;color:#404040;transform:scaleX(0.8889);">Trend</div>
<div class="t" style="left:246.70px;top:381.51px;font-family:'Liberation Sans';font-size:8.5px;font-weight:700;font-style:normal;color:#404040;transform:scaleX(0.8194);">YoY</div>
<div class="a" style="left:110.3px;top:397px;width:125.5px;height:2px;background:#f0a030;"></div>
<div class="t" style="left:112.00px;top:406.25px;font-family:'Liberation Sans';font-size:10px;font-weight:700;font-style:normal;color:#404040;transform:scaleX(0.8616);">Trend by selected measure</div>
<svg style="left:0;top:0" width="1200" height="600"><line x1="194.25" y1="426.7" x2="194.25" y2="560" stroke="#e6e6e6" stroke-width="1"/><line x1="234.80" y1="426.7" x2="234.80" y2="560" stroke="#e6e6e6" stroke-width="1"/><line x1="275.35" y1="426.7" x2="275.35" y2="560" stroke="#e6e6e6" stroke-width="1"/><line x1="315.90" y1="426.7" x2="315.90" y2="560" stroke="#e6e6e6" stroke-width="1"/><line x1="356.45" y1="426.7" x2="356.45" y2="560" stroke="#e6e6e6" stroke-width="1"/><line x1="397.00" y1="426.7" x2="397.00" y2="560" stroke="#e6e6e6" stroke-width="1"/><line x1="437.55" y1="426.7" x2="437.55" y2="560" stroke="#e6e6e6" stroke-width="1"/><line x1="478.10" y1="426.7" x2="478.10" y2="560" stroke="#e6e6e6" stroke-width="1"/><line x1="518.65" y1="426.7" x2="518.65" y2="560" stroke="#e6e6e6" stroke-width="1"/><line x1="559.20" y1="426.7" x2="559.20" y2="560" stroke="#e6e6e6" stroke-width="1"/><line x1="599.75" y1="426.7" x2="599.75" y2="560" stroke="#e6e6e6" stroke-width="1"/><line x1="640.30" y1="426.7" x2="640.30" y2="560" stroke="#e6e6e6" stroke-width="1"/><line x1="680.85" y1="426.7" x2="680.85" y2="560" stroke="#e6e6e6" stroke-width="1"/><line x1="721.40" y1="426.7" x2="721.40" y2="560" stroke="#e6e6e6" stroke-width="1"/><line x1="153.7" y1="426.7" x2="153.7" y2="560" stroke="#d0d0d0" stroke-width="1"/><line x1="149.5" y1="426.45" x2="153.7" y2="426.45" stroke="#d0d0d0" stroke-width="1"/><line x1="149.5" y1="466.10" x2="153.7" y2="466.10" stroke="#d0d0d0" stroke-width="1"/><line x1="149.5" y1="505.75" x2="153.7" y2="505.75" stroke="#d0d0d0" stroke-width="1"/><line x1="149.5" y1="545.40" x2="153.7" y2="545.40" stroke="#d0d0d0" stroke-width="1"/><path d="M155.4 505.75 L155.40 505.50 L158.78 505.50 L162.16 505.50 L165.54 505.50 L168.92 505.50 L172.29 505.50 L175.67 505.50 L179.05 505.50 L182.43 505.50 L185.81 505.50 L189.19 505.50 L192.57 505.50 L195.95 505.50 L199.33 505.50 L202.71 505.50 L206.08 505.50 L209.46 505.50 L212.84 505.50 L216.22 505.50 L219.60 505.50 L222.98 505.50 L226.36 505.50 L229.74 505.50 L233.12 505.50 L236.50 505.50 L239.87 505.50 L243.25 505.50 L246.63 505.50 L250.01 505.50 L253.39 505.50 L256.77 505.50 L260.15 505.50 L263.53 505.50 L266.91 505.50 L270.29 505.50 L273.66 505.50 L277.04 505.50 L280.42 505.50 L283.80 505.50 L287.18 505.50 L290.56 505.50 L293.94 505.50 L297.32 505.50 L300.70 505.50 L304.08 505.50 L307.46 505.50 L310.83 505.50 L314.21 505.50 L317.59 505.50 L320.97 505.50 L324.35 505.50 L327.73 505.50 L331.11 505.50 L334.49 505.50 L337.87 505.50 L341.25 505.50 L344.62 505.50 L348.00 505.50 L351.38 505.50 L354.76 505.50 L358.14 505.50 L361.52 505.50 L364.90 505.50 L368.28 505.50 L371.66 505.50 L375.04 505.50 L378.41 505.50 L381.79 505.50 L385.17 505.50 L388.55 505.50 L391.93 505.50 L395.31 505.50 L398.69 505.50 L402.07 505.50 L405.45 505.50 L408.83 505.50 L412.20 505.50 L415.58 505.50 L418.96 505.50 L422.34 505.50 L425.72 505.50 L429.10 505.50 L432.48 505.50 L435.86 505.50 L439.24 505.50 L444.20 505.50 L447.70 503.10 L451.20 498.90 L454.80 495.80 L458.30 495.80 L461.40 496.50 L464.70 496.70 L468.20 496.00 L471.80 496.50 L475.00 497.90 L478.90 495.30 L482.10 491.80 L485.20 495.60 L488.40 489.40 L491.90 486.50 L495.20 493.20 L498.70 490.00 L502.20 487.50 L505.50 488.20 L508.90 479.00 L512.40 476.20 L515.70 495.30 L519.00 491.10 L522.40 487.10 L525.60 484.00 L528.90 486.10 L532.00 479.00 L535.50 476.20 L539.10 475.50 L542.60 479.70 L546.10 474.80 L549.40 476.50 L552.90 477.60 L556.10 481.90 L559.60 480.90 L562.90 481.40 L566.30 472.70 L569.90 472.90 L573.10 471.50 L576.60 480.50 L579.90 479.00 L583.30 476.60 L586.50 472.40 L590.10 474.80 L593.60 472.00 L596.70 476.20 L600.40 469.80 L603.50 467.70 L606.80 466.30 L610.30 472.00 L613.40 464.90 L617.00 467.70 L620.20 467.30 L623.80 463.00 L627.30 462.00 L630.40 474.40 L634.00 472.00 L637.50 475.80 L640.60 477.60 L644.30 471.20 L647.40 465.90 L651.00 480.50 L654.20 475.50 L657.30 477.20 L660.90 477.60 L664.40 471.50 L667.70 477.20 L671.20 480.00 L674.60 475.50 L677.90 484.00 L681.10 486.50 L684.50 479.00 L687.80 474.80 L691.30 484.00 L694.60 497.90 L697.70 505.90 L701.08 505.90 L704.46 505.90 L707.84 505.90 L711.22 505.90 L714.60 505.90 L717.97 505.90 L721.35 505.90 L724.73 505.90 L728.11 505.90 L731.49 505.90 L734.87 505.90 L738.25 505.90 L741.63 505.90 L745.01 505.90 L748.39 505.90 L751.76 505.90 L755.14 505.90 L758.52 505.90 L758.52 505.75 Z" fill="#bfe0e1"/><line x1="154" y1="508" x2="758.6" y2="482.6" stroke="#b5b5b5" stroke-width="1.2" stroke-dasharray="5 3.5"/><path d="M155.40 505.50 L158.78 505.50 L162.16 505.50 L165.54 505.50 L168.92 505.50 L172.29 505.50 L175.67 505.50 L179.05 505.50 L182.43 505.50 L185.81 505.50 L189.19 505.50 L192.57 505.50 L195.95 505.50 L199.33 505.50 L202.71 505.50 L206.08 505.50 L209.46 505.50 L212.84 505.50 L216.22 505.50 L219.60 505.50 L222.98 505.50 L226.36 505.50 L229.74 505.50 L233.12 505.50 L236.50 505.50 L239.87 505.50 L243.25 505.50 L246.63 505.50 L250.01 505.50 L253.39 505.50 L256.77 505.50 L260.15 505.50 L263.53 505.50 L266.91 505.50 L270.29 505.50 L273.66 505.50 L277.04 505.50 L280.42 505.50 L283.80 505.50 L287.18 505.50 L290.56 505.50 L293.94 505.50 L297.32 505.50 L300.70 505.50 L304.08 505.50 L307.46 505.50 L310.83 505.50 L314.21 505.50 L317.59 505.50 L320.97 505.50 L324.35 505.50 L327.73 505.50 L331.11 505.50 L334.49 505.50 L337.87 505.50 L341.25 505.50 L344.62 505.50 L348.00 505.50 L351.38 505.50 L354.76 505.50 L358.14 505.50 L361.52 505.50 L364.90 505.50 L368.28 505.50 L371.66 505.50 L375.04 505.50 L378.41 505.50 L381.79 505.50 L385.17 505.50 L388.55 505.50 L391.93 505.50 L395.31 505.50 L398.69 505.50 L402.07 505.50 L405.45 505.50 L408.83 505.50 L412.20 505.50 L415.58 505.50 L418.96 505.50 L422.34 505.50 L425.72 505.50 L429.10 505.50 L432.48 505.50 L435.86 505.50 L439.24 505.50 L444.20 505.50 L447.70 503.10 L451.20 498.90 L454.80 495.80 L458.30 495.80 L461.40 496.50 L464.70 496.70 L468.20 496.00 L471.80 496.50 L475.00 497.90 L478.90 495.30 L482.10 491.80 L485.20 495.60 L488.40 489.40 L491.90 486.50 L495.20 493.20 L498.70 490.00 L502.20 487.50 L505.50 488.20 L508.90 479.00 L512.40 476.20 L515.70 495.30 L519.00 491.10 L522.40 487.10 L525.60 484.00 L528.90 486.10 L532.00 479.00 L535.50 476.20 L539.10 475.50 L542.60 479.70 L546.10 474.80 L549.40 476.50 L552.90 477.60 L556.10 481.90 L559.60 480.90 L562.90 481.40 L566.30 472.70 L569.90 472.90 L573.10 471.50 L576.60 480.50 L579.90 479.00 L583.30 476.60 L586.50 472.40 L590.10 474.80 L593.60 472.00 L596.70 476.20 L600.40 469.80 L603.50 467.70 L606.80 466.30 L610.30 472.00 L613.40 464.90 L617.00 467.70 L620.20 467.30 L623.80 463.00 L627.30 462.00 L630.40 474.40 L634.00 472.00 L637.50 475.80 L640.60 477.60 L644.30 471.20 L647.40 465.90 L651.00 480.50 L654.20 475.50 L657.30 477.20 L660.90 477.60 L664.40 471.50 L667.70 477.20 L671.20 480.00 L674.60 475.50 L677.90 484.00 L681.10 486.50 L684.50 479.00 L687.80 474.80 L691.30 484.00 L694.60 497.90 L697.70 505.90 L701.08 505.90 L704.46 505.90 L707.84 505.90 L711.22 505.90 L714.60 505.90 L717.97 505.90 L721.35 505.90 L724.73 505.90 L728.11 505.90 L731.49 505.90 L734.87 505.90 L738.25 505.90 L741.63 505.90 L745.01 505.90 L748.39 505.90 L751.76 505.90 L755.14 505.90 L758.52 505.90" fill="none" stroke="#2a9ea1" stroke-width="1.5" stroke-linejoin="round"/><circle cx="155.40" cy="505.50" r="1.45" fill="#2a9ea1"/><circle cx="158.78" cy="505.50" r="1.45" fill="#2a9ea1"/><circle cx="162.16" cy="505.50" r="1.45" fill="#2a9ea1"/><circle cx="165.54" cy="505.50" r="1.45" fill="#2a9ea1"/><circle cx="168.92" cy="505.50" r="1.45" fill="#2a9ea1"/><circle cx="172.29" cy="505.50" r="1.45" fill="#2a9ea1"/><circle cx="175.67" cy="505.50" r="1.45" fill="#2a9ea1"/><circle cx="179.05" cy="505.50" r="1.45" fill="#2a9ea1"/><circle cx="182.43" cy="505.50" r="1.45" fill="#2a9ea1"/><circle cx="185.81" cy="505.50" r="1.45" fill="#2a9ea1"/><circle cx="189.19" cy="505.50" r="1.45" fill="#2a9ea1"/><circle cx="192.57" cy="505.50" r="1.45" fill="#2a9ea1"/><circle cx="195.95" cy="505.50" r="1.45" fill="#2a9ea1"/><circle cx="199.33" cy="505.50" r="1.45" fill="#2a9ea1"/><circle cx="202.71" cy="505.50" r="1.45" fill="#2a9ea1"/><circle cx="206.08" cy="505.50" r="1.45" fill="#2a9ea1"/><circle cx="209.46" cy="505.50" r="1.45" fill="#2a9ea1"/><circle cx="212.84" cy="505.50" r="1.45" fill="#2a9ea1"/><circle cx="216.22" cy="505.50" r="1.45" fill="#2a9ea1"/><circle cx="219.60" cy="505.50" r="1.45" fill="#2a9ea1"/><circle cx="222.98" cy="505.50" r="1.45" fill="#2a9ea1"/><circle cx="226.36" cy="505.50" r="1.45" fill="#2a9ea1"/><circle cx="229.74" cy="505.50" r="1.45" fill="#2a9ea1"/><circle cx="233.12" cy="505.50" r="1.45" fill="#2a9ea1"/><circle cx="236.50" cy="505.50" r="1.45" fill="#2a9ea1"/><circle cx="239.87" cy="505.50" r="1.45" fill="#2a9ea1"/><circle cx="243.25" cy="505.50" r="1.45" fill="#2a9ea1"/><circle cx="246.63" cy="505.50" r="1.45" fill="#2a9ea1"/><circle cx="250.01" cy="505.50" r="1.45" fill="#2a9ea1"/><circle cx="253.39" cy="505.50" r="1.45" fill="#2a9ea1"/><circle cx="256.77" cy="505.50" r="1.45" fill="#2a9ea1"/><circle cx="260.15" cy="505.50" r="1.45" fill="#2a9ea1"/><circle cx="263.53" cy="505.50" r="1.45" fill="#2a9ea1"/><circle cx="266.91" cy="505.50" r="1.45" fill="#2a9ea1"/><circle cx="270.29" cy="505.50" r="1.45" fill="#2a9ea1"/><circle cx="273.66" cy="505.50" r="1.45" fill="#2a9ea1"/><circle cx="277.04" cy="505.50" r="1.45" fill="#2a9ea1"/><circle cx="280.42" cy="505.50" r="1.45" fill="#2a9ea1"/><circle cx="283.80" cy="505.50" r="1.45" fill="#2a9ea1"/><circle cx="287.18" cy="505.50" r="1.45" fill="#2a9ea1"/><circle cx="290.56" cy="505.50" r="1.45" fill="#2a9ea1"/><circle cx="293.94" cy="505.50" r="1.45" fill="#2a9ea1"/><circle cx="297.32" cy="505.50" r="1.45" fill="#2a9ea1"/><circle cx="300.70" cy="505.50" r="1.45" fill="#2a9ea1"/><circle cx="304.08" cy="505.50" r="1.45" fill="#2a9ea1"/><circle cx="307.46" cy="505.50" r="1.45" fill="#2a9ea1"/><circle cx="310.83" cy="505.50" r="1.45" fill="#2a9ea1"/><circle cx="314.21" cy="505.50" r="1.45" fill="#2a9ea1"/><circle cx="317.59" cy="505.50" r="1.45" fill="#2a9ea1"/><circle cx="320.97" cy="505.50" r="1.45" fill="#2a9ea1"/><circle cx="324.35" cy="505.50" r="1.45" fill="#2a9ea1"/><circle cx="327.73" cy="505.50" r="1.45" fill="#2a9ea1"/><circle cx="331.11" cy="505.50" r="1.45" fill="#2a9ea1"/><circle cx="334.49" cy="505.50" r="1.45" fill="#2a9ea1"/><circle cx="337.87" cy="505.50" r="1.45" fill="#2a9ea1"/><circle cx="341.25" cy="505.50" r="1.45" fill="#2a9ea1"/><circle cx="344.62" cy="505.50" r="1.45" fill="#2a9ea1"/><circle cx="348.00" cy="505.50" r="1.45" fill="#2a9ea1"/><circle cx="351.38" cy="505.50" r="1.45" fill="#2a9ea1"/><circle cx="354.76" cy="505.50" r="1.45" fill="#2a9ea1"/><circle cx="358.14" cy="505.50" r="1.45" fill="#2a9ea1"/><circle cx="361.52" cy="505.50" r="1.45" fill="#2a9ea1"/><circle cx="364.90" cy="505.50" r="1.45" fill="#2a9ea1"/><circle cx="368.28" cy="505.50" r="1.45" fill="#2a9ea1"/><circle cx="371.66" cy="505.50" r="1.45" fill="#2a9ea1"/><circle cx="375.04" cy="505.50" r="1.45" fill="#2a9ea1"/><circle cx="378.41" cy="505.50" r="1.45" fill="#2a9ea1"/><circle cx="381.79" cy="505.50" r="1.45" fill="#2a9ea1"/><circle cx="385.17" cy="505.50" r="1.45" fill="#2a9ea1"/><circle cx="388.55" cy="505.50" r="1.45" fill="#2a9ea1"/><circle cx="391.93" cy="505.50" r="1.45" fill="#2a9ea1"/><circle cx="395.31" cy="505.50" r="1.45" fill="#2a9ea1"/><circle cx="398.69" cy="505.50" r="1.45" fill="#2a9ea1"/><circle cx="402.07" cy="505.50" r="1.45" fill="#2a9ea1"/><circle cx="405.45" cy="505.50" r="1.45" fill="#2a9ea1"/><circle cx="408.83" cy="505.50" r="1.45" fill="#2a9ea1"/><circle cx="412.20" cy="505.50" r="1.45" fill="#2a9ea1"/><circle cx="415.58" cy="505.50" r="1.45" fill="#2a9ea1"/><circle cx="418.96" cy="505.50" r="1.45" fill="#2a9ea1"/><circle cx="422.34" cy="505.50" r="1.45" fill="#2a9ea1"/><circle cx="425.72" cy="505.50" r="1.45" fill="#2a9ea1"/><circle cx="429.10" cy="505.50" r="1.45" fill="#2a9ea1"/><circle cx="432.48" cy="505.50" r="1.45" fill="#2a9ea1"/><circle cx="435.86" cy="505.50" r="1.45" fill="#2a9ea1"/><circle cx="439.24" cy="505.50" r="1.45" fill="#2a9ea1"/><circle cx="444.20" cy="505.50" r="1.45" fill="#2a9ea1"/><circle cx="447.70" cy="503.10" r="1.45" fill="#2a9ea1"/><circle cx="451.20" cy="498.90" r="1.45" fill="#2a9ea1"/><circle cx="454.80" cy="495.80" r="1.45" fill="#2a9ea1"/><circle cx="458.30" cy="495.80" r="1.45" fill="#2a9ea1"/><circle cx="461.40" cy="496.50" r="1.45" fill="#2a9ea1"/><circle cx="464.70" cy="496.70" r="1.45" fill="#2a9ea1"/><circle cx="468.20" cy="496.00" r="1.45" fill="#2a9ea1"/><circle cx="471.80" cy="496.50" r="1.45" fill="#2a9ea1"/><circle cx="475.00" cy="497.90" r="1.45" fill="#2a9ea1"/><circle cx="478.90" cy="495.30" r="1.45" fill="#2a9ea1"/><circle cx="482.10" cy="491.80" r="1.45" fill="#2a9ea1"/><circle cx="485.20" cy="495.60" r="1.45" fill="#2a9ea1"/><circle cx="488.40" cy="489.40" r="1.45" fill="#2a9ea1"/><circle cx="491.90" cy="486.50" r="1.45" fill="#2a9ea1"/><circle cx="495.20" cy="493.20" r="1.45" fill="#2a9ea1"/><circle cx="498.70" cy="490.00" r="1.45" fill="#2a9ea1"/><circle cx="502.20" cy="487.50" r="1.45" fill="#2a9ea1"/><circle cx="505.50" cy="488.20" r="1.45" fill="#2a9ea1"/><circle cx="508.90" cy="479.00" r="1.45" fill="#2a9ea1"/><circle cx="512.40" cy="476.20" r="1.45" fill="#2a9ea1"/><circle cx="515.70" cy="495.30" r="1.45" fill="#2a9ea1"/><circle cx="519.00" cy="491.10" r="1.45" fill="#2a9ea1"/><circle cx="522.40" cy="487.10" r="1.45" fill="#2a9ea1"/><circle cx="525.60" cy="484.00" r="1.45" fill="#2a9ea1"/><circle cx="528.90" cy="486.10" r="1.45" fill="#2a9ea1"/><circle cx="532.00" cy="479.00" r="1.45" fill="#2a9ea1"/><circle cx="535.50" cy="476.20" r="1.45" fill="#2a9ea1"/><circle cx="539.10" cy="475.50" r="1.45" fill="#2a9ea1"/><circle cx="542.60" cy="479.70" r="1.45" fill="#2a9ea1"/><circle cx="546.10" cy="474.80" r="1.45" fill="#2a9ea1"/><circle cx="549.40" cy="476.50" r="1.45" fill="#2a9ea1"/><circle cx="552.90" cy="477.60" r="1.45" fill="#2a9ea1"/><circle cx="556.10" cy="481.90" r="1.45" fill="#2a9ea1"/><circle cx="559.60" cy="480.90" r="1.45" fill="#2a9ea1"/><circle cx="562.90" cy="481.40" r="1.45" fill="#2a9ea1"/><circle cx="566.30" cy="472.70" r="1.45" fill="#2a9ea1"/><circle cx="569.90" cy="472.90" r="1.45" fill="#2a9ea1"/><circle cx="573.10" cy="471.50" r="1.45" fill="#2a9ea1"/><circle cx="576.60" cy="480.50" r="1.45" fill="#2a9ea1"/><circle cx="579.90" cy="479.00" r="1.45" fill="#2a9ea1"/><circle cx="583.30" cy="476.60" r="1.45" fill="#2a9ea1"/><circle cx="586.50" cy="472.40" r="1.45" fill="#2a9ea1"/><circle cx="590.10" cy="474.80" r="1.45" fill="#2a9ea1"/><circle cx="593.60" cy="472.00" r="1.45" fill="#2a9ea1"/><circle cx="596.70" cy="476.20" r="1.45" fill="#2a9ea1"/><circle cx="600.40" cy="469.80" r="1.45" fill="#2a9ea1"/><circle cx="603.50" cy="467.70" r="1.45" fill="#2a9ea1"/><circle cx="606.80" cy="466.30" r="1.45" fill="#2a9ea1"/><circle cx="610.30" cy="472.00" r="1.45" fill="#2a9ea1"/><circle cx="613.40" cy="464.90" r="1.45" fill="#2a9ea1"/><circle cx="617.00" cy="467.70" r="1.45" fill="#2a9ea1"/><circle cx="620.20" cy="467.30" r="1.45" fill="#2a9ea1"/><circle cx="623.80" cy="463.00" r="1.45" fill="#2a9ea1"/><circle cx="627.30" cy="462.00" r="1.45" fill="#2a9ea1"/><circle cx="630.40" cy="474.40" r="1.45" fill="#2a9ea1"/><circle cx="634.00" cy="472.00" r="1.45" fill="#2a9ea1"/><circle cx="637.50" cy="475.80" r="1.45" fill="#2a9ea1"/><circle cx="640.60" cy="477.60" r="1.45" fill="#2a9ea1"/><circle cx="644.30" cy="471.20" r="1.45" fill="#2a9ea1"/><circle cx="647.40" cy="465.90" r="1.45" fill="#2a9ea1"/><circle cx="651.00" cy="480.50" r="1.45" fill="#2a9ea1"/><circle cx="654.20" cy="475.50" r="1.45" fill="#2a9ea1"/><circle cx="657.30" cy="477.20" r="1.45" fill="#2a9ea1"/><circle cx="660.90" cy="477.60" r="1.45" fill="#2a9ea1"/><circle cx="664.40" cy="471.50" r="1.45" fill="#2a9ea1"/><circle cx="667.70" cy="477.20" r="1.45" fill="#2a9ea1"/><circle cx="671.20" cy="480.00" r="1.45" fill="#2a9ea1"/><circle cx="674.60" cy="475.50" r="1.45" fill="#2a9ea1"/><circle cx="677.90" cy="484.00" r="1.45" fill="#2a9ea1"/><circle cx="681.10" cy="486.50" r="1.45" fill="#2a9ea1"/><circle cx="684.50" cy="479.00" r="1.45" fill="#2a9ea1"/><circle cx="687.80" cy="474.80" r="1.45" fill="#2a9ea1"/><circle cx="691.30" cy="484.00" r="1.45" fill="#2a9ea1"/><circle cx="694.60" cy="497.90" r="1.45" fill="#2a9ea1"/><circle cx="697.70" cy="505.90" r="1.45" fill="#2a9ea1"/><circle cx="701.08" cy="505.90" r="1.45" fill="#2a9ea1"/><circle cx="704.46" cy="505.90" r="1.45" fill="#2a9ea1"/><circle cx="707.84" cy="505.90" r="1.45" fill="#2a9ea1"/><circle cx="711.22" cy="505.90" r="1.45" fill="#2a9ea1"/><circle cx="714.60" cy="505.90" r="1.45" fill="#2a9ea1"/><circle cx="717.97" cy="505.90" r="1.45" fill="#2a9ea1"/><circle cx="721.35" cy="505.90" r="1.45" fill="#2a9ea1"/><circle cx="724.73" cy="505.90" r="1.45" fill="#2a9ea1"/><circle cx="728.11" cy="505.90" r="1.45" fill="#2a9ea1"/><circle cx="731.49" cy="505.90" r="1.45" fill="#2a9ea1"/><circle cx="734.87" cy="505.90" r="1.45" fill="#2a9ea1"/><circle cx="738.25" cy="505.90" r="1.45" fill="#2a9ea1"/><circle cx="741.63" cy="505.90" r="1.45" fill="#2a9ea1"/><circle cx="745.01" cy="505.90" r="1.45" fill="#2a9ea1"/><circle cx="748.39" cy="505.90" r="1.45" fill="#2a9ea1"/><circle cx="751.76" cy="505.90" r="1.45" fill="#2a9ea1"/><circle cx="755.14" cy="505.90" r="1.45" fill="#2a9ea1"/><circle cx="758.52" cy="505.90" r="1.45" fill="#2a9ea1"/><rect x="154.7" y="575.7" width="604.3" height="22" fill="#fff" stroke="#cfcfcf" stroke-width="1"/><path d="M155.2 590.3 L155.40 590.25 L158.78 590.25 L162.16 590.25 L165.54 590.25 L168.92 590.25 L172.29 590.25 L175.67 590.25 L179.05 590.25 L182.43 590.25 L185.81 590.25 L189.19 590.25 L192.57 590.25 L195.95 590.25 L199.33 590.25 L202.71 590.25 L206.08 590.25 L209.46 590.25 L212.84 590.25 L216.22 590.25 L219.60 590.25 L222.98 590.25 L226.36 590.25 L229.74 590.25 L233.12 590.25 L236.50 590.25 L239.87 590.25 L243.25 590.25 L246.63 590.25 L250.01 590.25 L253.39 590.25 L256.77 590.25 L260.15 590.25 L263.53 590.25 L266.91 590.25 L270.29 590.25 L273.66 590.25 L277.04 590.25 L280.42 590.25 L283.80 590.25 L287.18 590.25 L290.56 590.25 L293.94 590.25 L297.32 590.25 L300.70 590.25 L304.08 590.25 L307.46 590.25 L310.83 590.25 L314.21 590.25 L317.59 590.25 L320.97 590.25 L324.35 590.25 L327.73 590.25 L331.11 590.25 L334.49 590.25 L337.87 590.25 L341.25 590.25 L344.62 590.25 L348.00 590.25 L351.38 590.25 L354.76 590.25 L358.14 590.25 L361.52 590.25 L364.90 590.25 L368.28 590.25 L371.66 590.25 L375.04 590.25 L378.41 590.25 L381.79 590.25 L385.17 590.25 L388.55 590.25 L391.93 590.25 L395.31 590.25 L398.69 590.25 L402.07 590.25 L405.45 590.25 L408.83 590.25 L412.20 590.25 L415.58 590.25 L418.96 590.25 L422.34 590.25 L425.72 590.25 L429.10 590.25 L432.48 590.25 L435.86 590.25 L439.24 590.25 L444.20 590.25 L447.70 589.78 L451.20 588.97 L454.80 588.36 L458.30 588.36 L461.40 588.50 L464.70 588.54 L468.20 588.40 L471.80 588.50 L475.00 588.77 L478.90 588.27 L482.10 587.58 L485.20 588.32 L488.40 587.12 L491.90 586.55 L495.20 587.86 L498.70 587.23 L502.20 586.75 L505.50 586.88 L508.90 585.09 L512.40 584.55 L515.70 588.27 L519.00 587.45 L522.40 586.67 L525.60 586.07 L528.90 586.47 L532.00 585.09 L535.50 584.55 L539.10 584.41 L542.60 585.23 L546.10 584.27 L549.40 584.60 L552.90 584.82 L556.10 585.66 L559.60 585.46 L562.90 585.56 L566.30 583.87 L569.90 583.90 L573.10 583.63 L576.60 585.38 L579.90 585.09 L583.30 584.62 L586.50 583.81 L590.10 584.27 L593.60 583.73 L596.70 584.55 L600.40 583.30 L603.50 582.89 L606.80 582.62 L610.30 583.73 L613.40 582.35 L617.00 582.89 L620.20 582.81 L623.80 581.98 L627.30 581.78 L630.40 584.20 L634.00 583.73 L637.50 584.47 L640.60 584.82 L644.30 583.57 L647.40 582.54 L651.00 585.38 L654.20 584.41 L657.30 584.74 L660.90 584.82 L664.40 583.63 L667.70 584.74 L671.20 585.29 L674.60 584.41 L677.90 586.07 L681.10 586.55 L684.50 585.09 L687.80 584.27 L691.30 586.07 L694.60 588.77 L697.70 590.33 L701.08 590.33 L704.46 590.33 L707.84 590.33 L711.22 590.33 L714.60 590.33 L717.97 590.33 L721.35 590.33 L724.73 590.33 L728.11 590.33 L731.49 590.33 L734.87 590.33 L738.25 590.33 L741.63 590.33 L745.01 590.33 L748.39 590.33 L751.76 590.33 L755.14 590.33 L758.52 590.33 L758.5 590.3 Z" fill="#bfe0e1"/><path d="M155.2 590.3 L155.40 590.25 L158.78 590.25 L162.16 590.25 L165.54 590.25 L168.92 590.25 L172.29 590.25 L175.67 590.25 L179.05 590.25 L182.43 590.25 L185.81 590.25 L189.19 590.25 L192.57 590.25 L195.95 590.25 L199.33 590.25 L202.71 590.25 L206.08 590.25 L209.46 590.25 L212.84 590.25 L216.22 590.25 L219.60 590.25 L222.98 590.25 L226.36 590.25 L229.74 590.25 L233.12 590.25 L236.50 590.25 L239.87 590.25 L243.25 590.25 L246.63 590.25 L250.01 590.25 L253.39 590.25 L256.77 590.25 L260.15 590.25 L263.53 590.25 L266.91 590.25 L270.29 590.25 L273.66 590.25 L277.04 590.25 L280.42 590.25 L283.80 590.25 L287.18 590.25 L290.56 590.25 L293.94 590.25 L297.32 590.25 L300.70 590.25 L304.08 590.25 L307.46 590.25 L310.83 590.25 L314.21 590.25 L317.59 590.25 L320.97 590.25 L324.35 590.25 L327.73 590.25 L331.11 590.25 L334.49 590.25 L337.87 590.25 L341.25 590.25 L344.62 590.25 L348.00 590.25 L351.38 590.25 L354.76 590.25 L358.14 590.25 L361.52 590.25 L364.90 590.25 L368.28 590.25 L371.66 590.25 L375.04 590.25 L378.41 590.25 L381.79 590.25 L385.17 590.25 L388.55 590.25 L391.93 590.25 L395.31 590.25 L398.69 590.25 L402.07 590.25 L405.45 590.25 L408.83 590.25 L412.20 590.25 L415.58 590.25 L418.96 590.25 L422.34 590.25 L425.72 590.25 L429.10 590.25 L432.48 590.25 L435.86 590.25 L439.24 590.25 L444.20 590.25 L447.70 589.78 L451.20 588.97 L454.80 588.36 L458.30 588.36 L461.40 588.50 L464.70 588.54 L468.20 588.40 L471.80 588.50 L475.00 588.77 L478.90 588.27 L482.10 587.58 L485.20 588.32 L488.40 587.12 L491.90 586.55 L495.20 587.86 L498.70 587.23 L502.20 586.75 L505.50 586.88 L508.90 585.09 L512.40 584.55 L515.70 588.27 L519.00 587.45 L522.40 586.67 L525.60 586.07 L528.90 586.47 L532.00 585.09 L535.50 584.55 L539.10 584.41 L542.60 585.23 L546.10 584.27 L549.40 584.60 L552.90 584.82 L556.10 585.66 L559.60 585.46 L562.90 585.56 L566.30 583.87 L569.90 583.90 L573.10 583.63 L576.60 585.38 L579.90 585.09 L583.30 584.62 L586.50 583.81 L590.10 584.27 L593.60 583.73 L596.70 584.55 L600.40 583.30 L603.50 582.89 L606.80 582.62 L610.30 583.73 L613.40 582.35 L617.00 582.89 L620.20 582.81 L623.80 581.98 L627.30 581.78 L630.40 584.20 L634.00 583.73 L637.50 584.47 L640.60 584.82 L644.30 583.57 L647.40 582.54 L651.00 585.38 L654.20 584.41 L657.30 584.74 L660.90 584.82 L664.40 583.63 L667.70 584.74 L671.20 585.29 L674.60 584.41 L677.90 586.07 L681.10 586.55 L684.50 585.09 L687.80 584.27 L691.30 586.07 L694.60 588.77 L697.70 590.33 L701.08 590.33 L704.46 590.33 L707.84 590.33 L711.22 590.33 L714.60 590.33 L717.97 590.33 L721.35 590.33 L724.73 590.33 L728.11 590.33 L731.49 590.33 L734.87 590.33 L738.25 590.33 L741.63 590.33 L745.01 590.33 L748.39 590.33 L751.76 590.33 L755.14 590.33 L758.52 590.33" fill="none" stroke="#3aa5a8" stroke-width="0.9"/></svg>
<div class="t" style="left:136.00px;top:426.75px;font-family:'Liberation Mono';font-size:7.5px;font-weight:400;font-style:normal;color:#808080;">4k</div>
<div class="t" style="left:136.00px;top:462.55px;font-family:'Liberation Mono';font-size:7.5px;font-weight:400;font-style:normal;color:#808080;">2k</div>
<div class="t" style="left:140.50px;top:502.20px;font-family:'Liberation Mono';font-size:7.5px;font-weight:400;font-style:normal;color:#808080;">0</div>
<div class="t" style="left:131.50px;top:541.85px;font-family:'Liberation Mono';font-size:7.5px;font-weight:400;font-style:normal;color:#808080;">-2k</div>
<div class="t" style="left:157.00px;top:547.84px;font-family:'Liberation Mono';font-size:8px;font-weight:400;font-style:normal;color:#555;transform:scaleX(0.9174);">2010</div>
<div class="t" style="left:197.55px;top:547.84px;font-family:'Liberation Mono';font-size:8px;font-weight:400;font-style:normal;color:#555;transform:scaleX(0.9174);">2011</div>
<div class="t" style="left:238.10px;top:547.84px;font-family:'Liberation Mono';font-size:8px;font-weight:400;font-style:normal;color:#555;transform:scaleX(0.9174);">2012</div>
<div class="t" style="left:278.65px;top:547.84px;font-family:'Liberation Mono';font-size:8px;font-weight:400;font-style:normal;color:#555;transform:scaleX(0.9174);">2013</div>
<div class="t" style="left:319.20px;top:547.84px;font-family:'Liberation Mono';font-size:8px;font-weight:400;font-style:normal;color:#555;transform:scaleX(0.9174);">2014</div>
<div class="t" style="left:359.75px;top:547.84px;font-family:'Liberation Mono';font-size:8px;font-weight:400;font-style:normal;color:#555;transform:scaleX(0.9174);">2015</div>
<div class="t" style="left:400.30px;top:547.84px;font-family:'Liberation Mono';font-size:8px;font-weight:400;font-style:normal;color:#555;transform:scaleX(0.9174);">2016</div>
<div class="t" style="left:440.85px;top:547.84px;font-family:'Liberation Mono';font-size:8px;font-weight:400;font-style:normal;color:#555;transform:scaleX(0.9174);">2017</div>
<div class="t" style="left:481.40px;top:547.84px;font-family:'Liberation Mono';font-size:8px;font-weight:400;font-style:normal;color:#555;transform:scaleX(0.9174);">2018</div>
<div class="t" style="left:521.95px;top:547.84px;font-family:'Liberation Mono';font-size:8px;font-weight:400;font-style:normal;color:#555;transform:scaleX(0.9174);">2019</div>
<div class="t" style="left:562.50px;top:547.84px;font-family:'Liberation Mono';font-size:8px;font-weight:400;font-style:normal;color:#555;transform:scaleX(0.9174);">2020</div>
<div class="t" style="left:603.05px;top:547.84px;font-family:'Liberation Mono';font-size:8px;font-weight:400;font-style:normal;color:#555;transform:scaleX(0.9174);">2021</div>
<div class="t" style="left:643.60px;top:547.84px;font-family:'Liberation Mono';font-size:8px;font-weight:400;font-style:normal;color:#555;transform:scaleX(0.9174);">2022</div>
<div class="t" style="left:684.15px;top:547.84px;font-family:'Liberation Mono';font-size:8px;font-weight:400;font-style:normal;color:#555;transform:scaleX(0.9174);">2023</div>
<div class="t" style="left:724.70px;top:547.84px;font-family:'Liberation Mono';font-size:8px;font-weight:400;font-style:normal;color:#555;transform:scaleX(0.9174);">2024</div>
<div class="t" style="left:115.5px;top:517.5px;font-family:'Liberation Sans';font-size:8px;color:#595959;transform:rotate(-90deg);transform-origin:0 0;">Consultations</div>
<svg style="left:117.5px;top:460px" width="5" height="6"><path d="M0.5 0.5 L4.5 3 L0.5 5.5 Z" fill="#595959"/></svg>
<div class="t" style="left:154.40px;top:495.12px;font-family:'Liberation Mono';font-size:8.5px;font-weight:400;font-style:normal;color:#7a7a7a;transform:scaleX(0.7400);">5</div>
<div class="t" style="left:161.90px;top:495.12px;font-family:'Liberation Mono';font-size:8.5px;font-weight:400;font-style:normal;color:#7a7a7a;transform:scaleX(0.7400);">8</div>
<div class="t" style="left:168.15px;top:495.12px;font-family:'Liberation Mono';font-size:8.5px;font-weight:400;font-style:normal;color:#7a7a7a;transform:scaleX(0.7400);">5</div>
<div class="t" style="left:174.90px;top:495.12px;font-family:'Liberation Mono';font-size:8.5px;font-weight:400;font-style:normal;color:#7a7a7a;transform:scaleX(0.7400);">5</div>
<div class="t" style="left:181.90px;top:495.12px;font-family:'Liberation Mono';font-size:8.5px;font-weight:400;font-style:normal;color:#7a7a7a;transform:scaleX(0.7400);">6</div>
<div class="t" style="left:188.15px;top:495.12px;font-family:'Liberation Mono';font-size:8.5px;font-weight:400;font-style:normal;color:#7a7a7a;transform:scaleX(0.7400);">4</div>
<div class="t" style="left:195.65px;top:495.12px;font-family:'Liberation Mono';font-size:8.5px;font-weight:400;font-style:normal;color:#7a7a7a;transform:scaleX(0.7400);">9</div>
<div class="t" style="left:201.90px;top:495.12px;font-family:'Liberation Mono';font-size:8.5px;font-weight:400;font-style:normal;color:#7a7a7a;transform:scaleX(0.7400);">9</div>
<div class="t" style="left:208.65px;top:495.12px;font-family:'Liberation Mono';font-size:8.5px;font-weight:400;font-style:normal;color:#7a7a7a;transform:scaleX(0.7400);">2</div>
<div class="t" style="left:215.65px;top:495.12px;font-family:'Liberation Mono';font-size:8.5px;font-weight:400;font-style:normal;color:#7a7a7a;transform:scaleX(0.7400);">8</div>
<div class="t" style="left:222.40px;top:495.12px;font-family:'Liberation Mono';font-size:8.5px;font-weight:400;font-style:normal;color:#7a7a7a;transform:scaleX(0.7400);">3</div>
<div class="t" style="left:229.40px;top:495.12px;font-family:'Liberation Mono';font-size:8.5px;font-weight:400;font-style:normal;color:#7a7a7a;transform:scaleX(0.7400);">3</div>
<div class="t" style="left:235.65px;top:495.12px;font-family:'Liberation Mono';font-size:8.5px;font-weight:400;font-style:normal;color:#7a7a7a;transform:scaleX(0.7400);">6</div>
<div class="t" style="left:242.65px;top:495.12px;font-family:'Liberation Mono';font-size:8.5px;font-weight:400;font-style:normal;color:#7a7a7a;transform:scaleX(0.7400);">6</div>
<div class="t" style="left:249.40px;top:495.12px;font-family:'Liberation Mono';font-size:8.5px;font-weight:400;font-style:normal;color:#7a7a7a;transform:scaleX(0.7400);">3</div>
<div class="t" style="left:256.15px;top:495.12px;font-family:'Liberation Mono';font-size:8.5px;font-weight:400;font-style:normal;color:#7a7a7a;transform:scaleX(0.7400);">4</div>
<div class="t" style="left:263.15px;top:495.12px;font-family:'Liberation Mono';font-size:8.5px;font-weight:400;font-style:normal;color:#7a7a7a;transform:scaleX(0.7400);">6</div>
<div class="t" style="left:270.01px;top:495.12px;font-family:'Liberation Mono';font-size:8.5px;font-weight:400;font-style:normal;color:#7a7a7a;transform:scaleX(0.7400);">10</div>
<div class="t" style="left:283.26px;top:495.12px;font-family:'Liberation Mono';font-size:8.5px;font-weight:400;font-style:normal;color:#7a7a7a;transform:scaleX(0.7400);">14</div>
<div class="t" style="left:297.51px;top:495.12px;font-family:'Liberation Mono';font-size:8.5px;font-weight:400;font-style:normal;color:#7a7a7a;transform:scaleX(0.7400);">11</div>
<div class="t" style="left:310.65px;top:495.12px;font-family:'Liberation Mono';font-size:8.5px;font-weight:400;font-style:normal;color:#7a7a7a;transform:scaleX(0.7400);">8</div>
<div class="t" style="left:317.65px;top:495.12px;font-family:'Liberation Mono';font-size:8.5px;font-weight:400;font-style:normal;color:#7a7a7a;transform:scaleX(0.7400);">5</div>
<div class="t" style="left:324.40px;top:495.12px;font-family:'Liberation Mono';font-size:8.5px;font-weight:400;font-style:normal;color:#7a7a7a;transform:scaleX(0.7400);">6</div>
<div class="t" style="left:330.65px;top:495.12px;font-family:'Liberation Mono';font-size:8.5px;font-weight:400;font-style:normal;color:#7a7a7a;transform:scaleX(0.7400);">8</div>
<div class="t" style="left:337.65px;top:495.12px;font-family:'Liberation Mono';font-size:8.5px;font-weight:400;font-style:normal;color:#7a7a7a;transform:scaleX(0.7400);">8</div>
<div class="t" style="left:344.40px;top:495.12px;font-family:'Liberation Mono';font-size:8.5px;font-weight:400;font-style:normal;color:#7a7a7a;transform:scaleX(0.7400);">8</div>
<div class="t" style="left:351.26px;top:495.12px;font-family:'Liberation Mono';font-size:8.5px;font-weight:400;font-style:normal;color:#7a7a7a;transform:scaleX(0.7400);">13</div>
<div class="t" style="left:366.26px;top:495.12px;font-family:'Liberation Mono';font-size:8.5px;font-weight:400;font-style:normal;color:#7a7a7a;transform:scaleX(0.7400);">14</div>
<div class="t" style="left:375.65px;top:495.12px;font-family:'Liberation Mono';font-size:8.5px;font-weight:400;font-style:normal;color:#7a7a7a;transform:scaleX(0.7400);">9</div>
<div class="t" style="left:386.26px;top:495.12px;font-family:'Liberation Mono';font-size:8.5px;font-weight:400;font-style:normal;color:#7a7a7a;transform:scaleX(0.7400);">11</div>
<div class="t" style="left:398.15px;top:495.12px;font-family:'Liberation Mono';font-size:8.5px;font-weight:400;font-style:normal;color:#7a7a7a;transform:scaleX(0.7400);">7</div>
<div class="t" style="left:406.26px;top:495.12px;font-family:'Liberation Mono';font-size:8.5px;font-weight:400;font-style:normal;color:#7a7a7a;transform:scaleX(0.7400);">11</div>
<div class="t" style="left:420.01px;top:495.12px;font-family:'Liberation Mono';font-size:8.5px;font-weight:400;font-style:normal;color:#7a7a7a;transform:scaleX(0.7400);">13</div>
<div class="t" style="left:433.76px;top:495.12px;font-family:'Liberation Mono';font-size:8.5px;font-weight:400;font-style:normal;color:#7a7a7a;transform:scaleX(0.7400);">10</div>
<div class="t" style="left:155.65px;top:508.22px;font-family:'Liberation Mono';font-size:8.5px;font-weight:400;font-style:normal;color:#7a7a7a;transform:scaleX(0.7400);">5</div>
<div class="t" style="left:161.90px;top:508.22px;font-family:'Liberation Mono';font-size:8.5px;font-weight:400;font-style:normal;color:#7a7a7a;transform:scaleX(0.7400);">4</div>
<div class="t" style="left:168.15px;top:508.22px;font-family:'Liberation Mono';font-size:8.5px;font-weight:400;font-style:normal;color:#7a7a7a;transform:scaleX(0.7400);">0</div>
<div class="t" style="left:178.15px;top:508.22px;font-family:'Liberation Mono';font-size:8.5px;font-weight:400;font-style:normal;color:#7a7a7a;transform:scaleX(0.7400);">6</div>
<div class="t" style="left:187.51px;top:508.22px;font-family:'Liberation Mono';font-size:8.5px;font-weight:400;font-style:normal;color:#7a7a7a;transform:scaleX(0.7400);">10</div>
<div class="t" style="left:198.15px;top:508.22px;font-family:'Liberation Mono';font-size:8.5px;font-weight:400;font-style:normal;color:#7a7a7a;transform:scaleX(0.7400);">7</div>
<div class="t" style="left:205.65px;top:508.22px;font-family:'Liberation Mono';font-size:8.5px;font-weight:400;font-style:normal;color:#7a7a7a;transform:scaleX(0.7400);">9</div>
<div class="t" style="left:211.90px;top:508.22px;font-family:'Liberation Mono';font-size:8.5px;font-weight:400;font-style:normal;color:#7a7a7a;transform:scaleX(0.7400);">2</div>
<div class="t" style="left:219.40px;top:508.22px;font-family:'Liberation Mono';font-size:8.5px;font-weight:400;font-style:normal;color:#7a7a7a;transform:scaleX(0.7400);">7</div>
<div class="t" style="left:225.65px;top:508.22px;font-family:'Liberation Mono';font-size:8.5px;font-weight:400;font-style:normal;color:#7a7a7a;transform:scaleX(0.7400);">7</div>
<div class="t" style="left:231.90px;top:508.22px;font-family:'Liberation Mono';font-size:8.5px;font-weight:400;font-style:normal;color:#7a7a7a;transform:scaleX(0.7400);">6</div>
<div class="t" style="left:239.40px;top:508.22px;font-family:'Liberation Mono';font-size:8.5px;font-weight:400;font-style:normal;color:#7a7a7a;transform:scaleX(0.7400);">4</div>
<div class="t" style="left:246.26px;top:508.22px;font-family:'Liberation Mono';font-size:8.5px;font-weight:400;font-style:normal;color:#7a7a7a;transform:scaleX(0.7400);">11</div>
<div class="t" style="left:259.40px;top:508.22px;font-family:'Liberation Mono';font-size:8.5px;font-weight:400;font-style:normal;color:#7a7a7a;transform:scaleX(0.7400);">5</div>
<div class="t" style="left:266.26px;top:508.22px;font-family:'Liberation Mono';font-size:8.5px;font-weight:400;font-style:normal;color:#7a7a7a;transform:scaleX(0.7400);">11</div>
<div class="t" style="left:280.65px;top:508.22px;font-family:'Liberation Mono';font-size:8.5px;font-weight:400;font-style:normal;color:#7a7a7a;transform:scaleX(0.7400);">7</div>
<div class="t" style="left:286.90px;top:508.22px;font-family:'Liberation Mono';font-size:8.5px;font-weight:400;font-style:normal;color:#7a7a7a;transform:scaleX(0.7400);">6</div>
<div class="t" style="left:293.15px;top:508.22px;font-family:'Liberation Mono';font-size:8.5px;font-weight:400;font-style:normal;color:#7a7a7a;transform:scaleX(0.7400);">4</div>
<div class="t" style="left:300.65px;top:508.22px;font-family:'Liberation Mono';font-size:8.5px;font-weight:400;font-style:normal;color:#7a7a7a;transform:scaleX(0.7400);">4</div>
<div class="t" style="left:307.51px;top:508.22px;font-family:'Liberation Mono';font-size:8.5px;font-weight:400;font-style:normal;color:#7a7a7a;transform:scaleX(0.7400);">10</div>
<div class="t" style="left:320.65px;top:508.22px;font-family:'Liberation Mono';font-size:8.5px;font-weight:400;font-style:normal;color:#7a7a7a;transform:scaleX(0.7400);">7</div>
<div class="t" style="left:327.51px;top:508.22px;font-family:'Liberation Mono';font-size:8.5px;font-weight:400;font-style:normal;color:#7a7a7a;transform:scaleX(0.7400);">10</div>
<div class="t" style="left:338.15px;top:508.22px;font-family:'Liberation Mono';font-size:8.5px;font-weight:400;font-style:normal;color:#7a7a7a;transform:scaleX(0.7400);">6</div>
<div class="t" style="left:346.90px;top:508.22px;font-family:'Liberation Mono';font-size:8.5px;font-weight:400;font-style:normal;color:#7a7a7a;transform:scaleX(0.7400);">9</div>
<div class="t" style="left:354.40px;top:508.22px;font-family:'Liberation Mono';font-size:8.5px;font-weight:400;font-style:normal;color:#7a7a7a;transform:scaleX(0.7400);">5</div>
<div class="t" style="left:360.65px;top:508.22px;font-family:'Liberation Mono';font-size:8.5px;font-weight:400;font-style:normal;color:#7a7a7a;transform:scaleX(0.7400);">8</div>
<div class="t" style="left:366.26px;top:508.22px;font-family:'Liberation Mono';font-size:8.5px;font-weight:400;font-style:normal;color:#7a7a7a;transform:scaleX(0.7400);">10</div>
<div class="t" style="left:376.90px;top:508.22px;font-family:'Liberation Mono';font-size:8.5px;font-weight:400;font-style:normal;color:#7a7a7a;transform:scaleX(0.7400);">7</div>
<div class="t" style="left:384.40px;top:508.22px;font-family:'Liberation Mono';font-size:8.5px;font-weight:400;font-style:normal;color:#7a7a7a;transform:scaleX(0.7400);">7</div>
<div class="t" style="left:390.65px;top:508.22px;font-family:'Liberation Mono';font-size:8.5px;font-weight:400;font-style:normal;color:#7a7a7a;transform:scaleX(0.7400);">9</div>
<div class="t" style="left:401.26px;top:508.22px;font-family:'Liberation Mono';font-size:8.5px;font-weight:400;font-style:normal;color:#7a7a7a;transform:scaleX(0.7400);">10</div>
<div class="t" style="left:416.26px;top:508.22px;font-family:'Liberation Mono';font-size:8.5px;font-weight:400;font-style:normal;color:#7a7a7a;transform:scaleX(0.7400);">10</div>
<div class="t" style="left:430.01px;top:508.22px;font-family:'Liberation Mono';font-size:8.5px;font-weight:400;font-style:normal;color:#7a7a7a;transform:scaleX(0.7400);">14</div>
<div class="t" style="left:442.76px;top:508.22px;font-family:'Liberation Mono';font-size:8.5px;font-weight:400;font-style:normal;color:#7a7a7a;transform:scaleX(0.7400);">11</div>
<div class="t" style="left:449.18px;top:484.72px;font-family:'Liberation Mono';font-size:8.5px;font-weight:400;font-style:normal;color:#7a7a7a;transform:scaleX(0.7400);">505</div>
<div class="t" style="left:465.48px;top:483.92px;font-family:'Liberation Mono';font-size:8.5px;font-weight:400;font-style:normal;color:#7a7a7a;transform:scaleX(0.7400);">536</div>
<div class="t" style="left:459.43px;top:499.52px;font-family:'Liberation Mono';font-size:8.5px;font-weight:400;font-style:normal;color:#7a7a7a;transform:scaleX(0.7400);">439</div>
<div class="t" style="left:476.78px;top:500.22px;font-family:'Liberation Mono';font-size:8.5px;font-weight:400;font-style:normal;color:#7a7a7a;transform:scaleX(0.7400);">417</div>
<div class="t" style="left:485.98px;top:475.42px;font-family:'Liberation Mono';font-size:8.5px;font-weight:400;font-style:normal;color:#7a7a7a;transform:scaleX(0.7400);">959</div>
<div class="t" style="left:497.33px;top:496.02px;font-family:'Liberation Mono';font-size:8.5px;font-weight:400;font-style:normal;color:#7a7a7a;transform:scaleX(0.7400);">614</div>
<div class="t" style="left:503.45px;top:465.52px;font-family:'Liberation Mono';font-size:8.5px;font-weight:400;font-style:normal;color:#7a7a7a;transform:scaleX(0.7400);">1.48k</div>
<div class="t" style="left:517.18px;top:497.42px;font-family:'Liberation Mono';font-size:8.5px;font-weight:400;font-style:normal;color:#7a7a7a;transform:scaleX(0.7400);">533</div>
<div class="t" style="left:533.20px;top:481.82px;font-family:'Liberation Mono';font-size:8.5px;font-weight:400;font-style:normal;color:#7a7a7a;transform:scaleX(0.7400);">1.35k</div>
<div class="t" style="left:536.80px;top:463.42px;font-family:'Liberation Mono';font-size:8.5px;font-weight:400;font-style:normal;color:#7a7a7a;transform:scaleX(0.7400);">1.56k</div>
<div class="t" style="left:557.30px;top:483.92px;font-family:'Liberation Mono';font-size:8.5px;font-weight:400;font-style:normal;color:#7a7a7a;transform:scaleX(0.7400);">1.21k</div>
<div class="t" style="left:563.70px;top:460.62px;font-family:'Liberation Mono';font-size:8.5px;font-weight:400;font-style:normal;color:#7a7a7a;transform:scaleX(0.7400);">1.71k</div>
<div class="t" style="left:581.00px;top:481.82px;font-family:'Liberation Mono';font-size:8.5px;font-weight:400;font-style:normal;color:#7a7a7a;transform:scaleX(0.7400);">1.33k</div>
<div class="t" style="left:585.39px;top:459.22px;font-family:'Liberation Mono';font-size:8.5px;font-weight:400;font-style:normal;color:#7a7a7a;transform:scaleX(0.7400);">1.8k</div>
<div class="t" style="left:602.74px;top:475.42px;font-family:'Liberation Mono';font-size:8.5px;font-weight:400;font-style:normal;color:#7a7a7a;transform:scaleX(0.7400);">1.7k</div>
<div class="t" style="left:619.74px;top:451.42px;font-family:'Liberation Mono';font-size:8.5px;font-weight:400;font-style:normal;color:#7a7a7a;transform:scaleX(0.7400);">2.2k</div>
<div class="t" style="left:621.35px;top:480.42px;font-family:'Liberation Mono';font-size:8.5px;font-weight:400;font-style:normal;color:#7a7a7a;transform:scaleX(0.7400);">1.43k</div>
<div class="t" style="left:638.00px;top:454.92px;font-family:'Liberation Mono';font-size:8.5px;font-weight:400;font-style:normal;color:#7a7a7a;transform:scaleX(0.7400);">2.03k</div>
<div class="t" style="left:651.80px;top:483.22px;font-family:'Liberation Mono';font-size:8.5px;font-weight:400;font-style:normal;color:#7a7a7a;transform:scaleX(0.7400);">1.27k</div>
<div class="t" style="left:665.25px;top:461.32px;font-family:'Liberation Mono';font-size:8.5px;font-weight:400;font-style:normal;color:#7a7a7a;transform:scaleX(0.7400);">1.72k</div>
<div class="t" style="left:675.78px;top:488.92px;font-family:'Liberation Mono';font-size:8.5px;font-weight:400;font-style:normal;color:#7a7a7a;transform:scaleX(0.7400);">977</div>
<div class="t" style="left:689.00px;top:464.12px;font-family:'Liberation Mono';font-size:8.5px;font-weight:400;font-style:normal;color:#7a7a7a;transform:scaleX(0.7400);">1.56k</div>
<div class="t" style="left:694.35px;top:480.42px;font-family:'Liberation Mono';font-size:8.5px;font-weight:400;font-style:normal;color:#7a7a7a;transform:scaleX(0.7400);">1.08k</div>
<div class="t" style="left:699.65px;top:494.62px;font-family:'Liberation Mono';font-size:8.5px;font-weight:400;font-style:normal;color:#7a7a7a;transform:scaleX(0.7400);">0</div>
<div class="t" style="left:706.71px;top:494.62px;font-family:'Liberation Mono';font-size:8.5px;font-weight:400;font-style:normal;color:#7a7a7a;transform:scaleX(0.7400);">0</div>
<div class="t" style="left:713.77px;top:494.62px;font-family:'Liberation Mono';font-size:8.5px;font-weight:400;font-style:normal;color:#7a7a7a;transform:scaleX(0.7400);">0</div>
<div class="t" style="left:720.83px;top:494.62px;font-family:'Liberation Mono';font-size:8.5px;font-weight:400;font-style:normal;color:#7a7a7a;transform:scaleX(0.7400);">0</div>
<div class="t" style="left:727.89px;top:494.62px;font-family:'Liberation Mono';font-size:8.5px;font-weight:400;font-style:normal;color:#7a7a7a;transform:scaleX(0.7400);">0</div>
<div class="t" style="left:734.95px;top:494.62px;font-family:'Liberation Mono';font-size:8.5px;font-weight:400;font-style:normal;color:#7a7a7a;transform:scaleX(0.7400);">0</div>
<div class="t" style="left:742.01px;top:494.62px;font-family:'Liberation Mono';font-size:8.5px;font-weight:400;font-style:normal;color:#7a7a7a;transform:scaleX(0.7400);">0</div>
<div class="t" style="left:749.07px;top:494.62px;font-family:'Liberation Mono';font-size:8.5px;font-weight:400;font-style:normal;color:#7a7a7a;transform:scaleX(0.7400);">0</div>
<div class="t" style="left:756.13px;top:494.62px;font-family:'Liberation Mono';font-size:8.5px;font-weight:400;font-style:normal;color:#7a7a7a;transform:scaleX(0.7400);">0</div>
<div class="t" style="left:692.65px;top:508.02px;font-family:'Liberation Mono';font-size:8.5px;font-weight:400;font-style:normal;color:#7a7a7a;transform:scaleX(0.7400);">0</div>
<div class="t" style="left:699.50px;top:508.02px;font-family:'Liberation Mono';font-size:8.5px;font-weight:400;font-style:normal;color:#7a7a7a;transform:scaleX(0.7400);">0</div>
<div class="t" style="left:706.35px;top:508.02px;font-family:'Liberation Mono';font-size:8.5px;font-weight:400;font-style:normal;color:#7a7a7a;transform:scaleX(0.7400);">0</div>
<div class="t" style="left:713.20px;top:508.02px;font-family:'Liberation Mono';font-size:8.5px;font-weight:400;font-style:normal;color:#7a7a7a;transform:scaleX(0.7400);">0</div>
<div class="t" style="left:720.05px;top:508.02px;font-family:'Liberation Mono';font-size:8.5px;font-weight:400;font-style:normal;color:#7a7a7a;transform:scaleX(0.7400);">0</div>
<div class="t" style="left:726.90px;top:508.02px;font-family:'Liberation Mono';font-size:8.5px;font-weight:400;font-style:normal;color:#7a7a7a;transform:scaleX(0.7400);">0</div>
<div class="t" style="left:733.75px;top:508.02px;font-family:'Liberation Mono';font-size:8.5px;font-weight:400;font-style:normal;color:#7a7a7a;transform:scaleX(0.7400);">0</div>
<div class="t" style="left:740.60px;top:508.02px;font-family:'Liberation Mono';font-size:8.5px;font-weight:400;font-style:normal;color:#7a7a7a;transform:scaleX(0.7400);">0</div>
<div class="t" style="left:747.45px;top:508.02px;font-family:'Liberation Mono';font-size:8.5px;font-weight:400;font-style:normal;color:#7a7a7a;transform:scaleX(0.7400);">0</div>
<div class="t" style="left:754.30px;top:508.02px;font-family:'Liberation Mono';font-size:8.5px;font-weight:400;font-style:normal;color:#7a7a7a;transform:scaleX(0.7400);">0</div>
<div class="card" style="left:770px;top:375px;width:429px;height:230px"></div>
<div class="t" style="left:777.70px;top:380.95px;font-family:'Liberation Sans';font-size:10px;font-weight:700;font-style:normal;color:#404040;transform:scaleX(0.8772);">Top practices / doctors by selected measure</div>
<div class="t" style="left:777.70px;top:393.46px;font-family:'Liberation Sans';font-size:8px;font-weight:400;font-style:normal;color:#8c8c8c;transform:scaleX(0.9339);">Select practice to drill down to doctor or switch measure</div>
<svg style="left:0;top:0" width="1200" height="600"><line x1="873.4" y1="410.8" x2="873.4" y2="555" stroke="#d6d6d6" stroke-width="1"/><line x1="873.4" y1="555" x2="1166.5" y2="555" stroke="#d6d6d6" stroke-width="1"/><rect x="873.9" y="413.30" width="240.97" height="11.7" fill="#249fa4"/><rect x="873.9" y="430.95" width="225.75" height="11.7" fill="#249fa4"/><rect x="873.9" y="448.60" width="174.07" height="11.7" fill="#249fa4"/><rect x="873.9" y="466.25" width="161.92" height="11.7" fill="#249fa4"/><rect x="873.9" y="483.90" width="159.43" height="11.7" fill="#249fa4"/><rect x="873.9" y="501.55" width="98.23" height="11.7" fill="#249fa4"/><rect x="873.9" y="519.20" width="87.40" height="11.7" fill="#249fa4"/><rect x="873.9" y="536.85" width="65.73" height="11.7" fill="#249fa4"/><rect x="873.9" y="554" width="61.6" height="1" fill="#249fa4"/><rect x="1166.7" y="518.3" width="25" height="36.7" fill="#e9e9e9"/><rect x="1166.7" y="410" width="25" height="108.3" fill="#fff" stroke="#cfcfcf" stroke-width="1"/><rect x="1167.2" y="413.30" width="20.3" height="8" fill="#249fa4"/><rect x="1167.2" y="426.50" width="19" height="8" fill="#249fa4"/><rect x="1167.2" y="439.70" width="14.7" height="8" fill="#249fa4"/><rect x="1167.2" y="452.90" width="13" height="8" fill="#249fa4"/><rect x="1167.2" y="466.10" width="13" height="8" fill="#249fa4"/><rect x="1167.2" y="479.30" width="8" height="8" fill="#249fa4"/><rect x="1167.2" y="492.50" width="6.3" height="8" fill="#249fa4"/><rect x="1167.2" y="505.70" width="4.7" height="8" fill="#249fa4"/><rect x="1167.2" y="518.90" width="4.7" height="8" fill="#249fa4"/><rect x="1167.2" y="532.10" width="1.3" height="8" fill="#249fa4"/><rect x="1167.2" y="545.30" width="1.3" height="8" fill="#249fa4"/></svg>
<div class="t" style="left:826.50px;top:414.46px;font-family:'Liberation Sans';font-size:8.5px;font-weight:400;font-style:normal;color:#595959;transform:scaleX(0.9356);">Wattleford</div>
<div class="t" style="left:868.50px;top:416.22px;font-family:'Liberation Sans';font-size:6px;font-weight:400;font-style:normal;color:#999;">1</div>
<div class="t" style="left:821.40px;top:432.11px;font-family:'Liberation Sans';font-size:8.5px;font-weight:400;font-style:normal;color:#595959;transform:scaleX(0.8956);">Barcoongup</div>
<div class="t" style="left:868.50px;top:433.87px;font-family:'Liberation Sans';font-size:6px;font-weight:400;font-style:normal;color:#999;">/</div>
<div class="t" style="left:791.10px;top:449.76px;font-family:'Liberation Sans';font-size:8.5px;font-weight:400;font-style:normal;color:#595959;transform:scaleX(0.8937);">Kookaburra Crossing</div>
<div class="t" style="left:868.50px;top:451.52px;font-family:'Liberation Sans';font-size:6px;font-weight:400;font-style:normal;color:#999;">/</div>
<div class="t" style="left:818.10px;top:467.41px;font-family:'Liberation Sans';font-size:8.5px;font-weight:400;font-style:normal;color:#595959;transform:scaleX(0.8640);">Yabbie Creek</div>
<div class="t" style="left:868.50px;top:469.17px;font-family:'Liberation Sans';font-size:6px;font-weight:400;font-style:normal;color:#999;">t</div>
<div class="t" style="left:827.50px;top:485.06px;font-family:'Liberation Sans';font-size:8.5px;font-weight:400;font-style:normal;color:#595959;transform:scaleX(0.8637);">Koala Vale</div>
<div class="t" style="left:868.50px;top:486.82px;font-family:'Liberation Sans';font-size:6px;font-weight:400;font-style:normal;color:#999;">/</div>
<div class="t" style="left:820.70px;top:502.71px;font-family:'Liberation Sans';font-size:8.5px;font-weight:400;font-style:normal;color:#595959;transform:scaleX(0.8927);">Barramunda</div>
<div class="t" style="left:868.50px;top:504.47px;font-family:'Liberation Sans';font-size:6px;font-weight:400;font-style:normal;color:#999;">J</div>
<div class="t" style="left:819.40px;top:520.36px;font-family:'Liberation Sans';font-size:8.5px;font-weight:400;font-style:normal;color:#595959;transform:scaleX(0.9299);">Willowbrook</div>
<div class="t" style="left:868.50px;top:522.12px;font-family:'Liberation Sans';font-size:6px;font-weight:400;font-style:normal;color:#999;">J</div>
<div class="t" style="left:823.60px;top:538.01px;font-family:'Liberation Sans';font-size:8.5px;font-weight:400;font-style:normal;color:#595959;transform:scaleX(0.9134);">Stonewood</div>
<div class="t" style="left:868.50px;top:539.77px;font-family:'Liberation Sans';font-size:6px;font-weight:400;font-style:normal;color:#999;">1</div>
<div class="t" style="left:1118.37px;top:415.19px;font-family:'Liberation Mono';font-size:8px;font-weight:400;font-style:normal;color:#595959;transform:scaleX(0.7800);">16.46k</div>
<div class="t" style="left:1103.15px;top:432.84px;font-family:'Liberation Mono';font-size:8px;font-weight:400;font-style:normal;color:#595959;transform:scaleX(0.7800);">15.42k</div>
<div class="t" style="left:1051.47px;top:450.49px;font-family:'Liberation Mono';font-size:8px;font-weight:400;font-style:normal;color:#595959;transform:scaleX(0.7800);">11.89k</div>
<div class="t" style="left:1039.32px;top:468.14px;font-family:'Liberation Mono';font-size:8px;font-weight:400;font-style:normal;color:#595959;transform:scaleX(0.7800);">11.06k</div>
<div class="t" style="left:1036.83px;top:485.79px;font-family:'Liberation Mono';font-size:8px;font-weight:400;font-style:normal;color:#595959;transform:scaleX(0.7800);">10.89k</div>
<div class="t" style="left:975.63px;top:503.44px;font-family:'Liberation Mono';font-size:8px;font-weight:400;font-style:normal;color:#595959;transform:scaleX(0.7800);">6.71k</div>
<div class="t" style="left:964.80px;top:521.09px;font-family:'Liberation Mono';font-size:8px;font-weight:400;font-style:normal;color:#595959;transform:scaleX(0.7800);">5.97k</div>
<div class="t" style="left:943.13px;top:538.74px;font-family:'Liberation Mono';font-size:8px;font-weight:400;font-style:normal;color:#595959;transform:scaleX(0.7800);">4.49k</div>
<div class="t" style="left:871.27px;top:567.84px;font-family:'Liberation Mono';font-size:8px;font-weight:400;font-style:normal;color:#666;transform:scaleX(0.8500);">0</div>
<div class="t" style="left:942.43px;top:567.84px;font-family:'Liberation Mono';font-size:8px;font-weight:400;font-style:normal;color:#666;transform:scaleX(0.8500);">5k</div>
<div class="t" style="left:1013.59px;top:567.84px;font-family:'Liberation Mono';font-size:8px;font-weight:400;font-style:normal;color:#666;transform:scaleX(0.8500);">10k</div>
<div class="t" style="left:1086.79px;top:567.84px;font-family:'Liberation Mono';font-size:8px;font-weight:400;font-style:normal;color:#666;transform:scaleX(0.8500);">15k</div>
<div class="t" style="left:1159.99px;top:567.84px;font-family:'Liberation Mono';font-size:8px;font-weight:400;font-style:normal;color:#666;transform:scaleX(0.8500);">20k</div>
<div class="t" style="left:988.30px;top:584.51px;font-family:'Liberation Sans';font-size:8.5px;font-weight:400;font-style:normal;color:#595959;transform:scaleX(0.8975);">Consultations</div>
<svg style="left:1040.5px;top:587px" width="7" height="5"><path d="M0.5 0.5 H6 L3.25 4 Z" fill="#595959"/></svg>
</body></html>
